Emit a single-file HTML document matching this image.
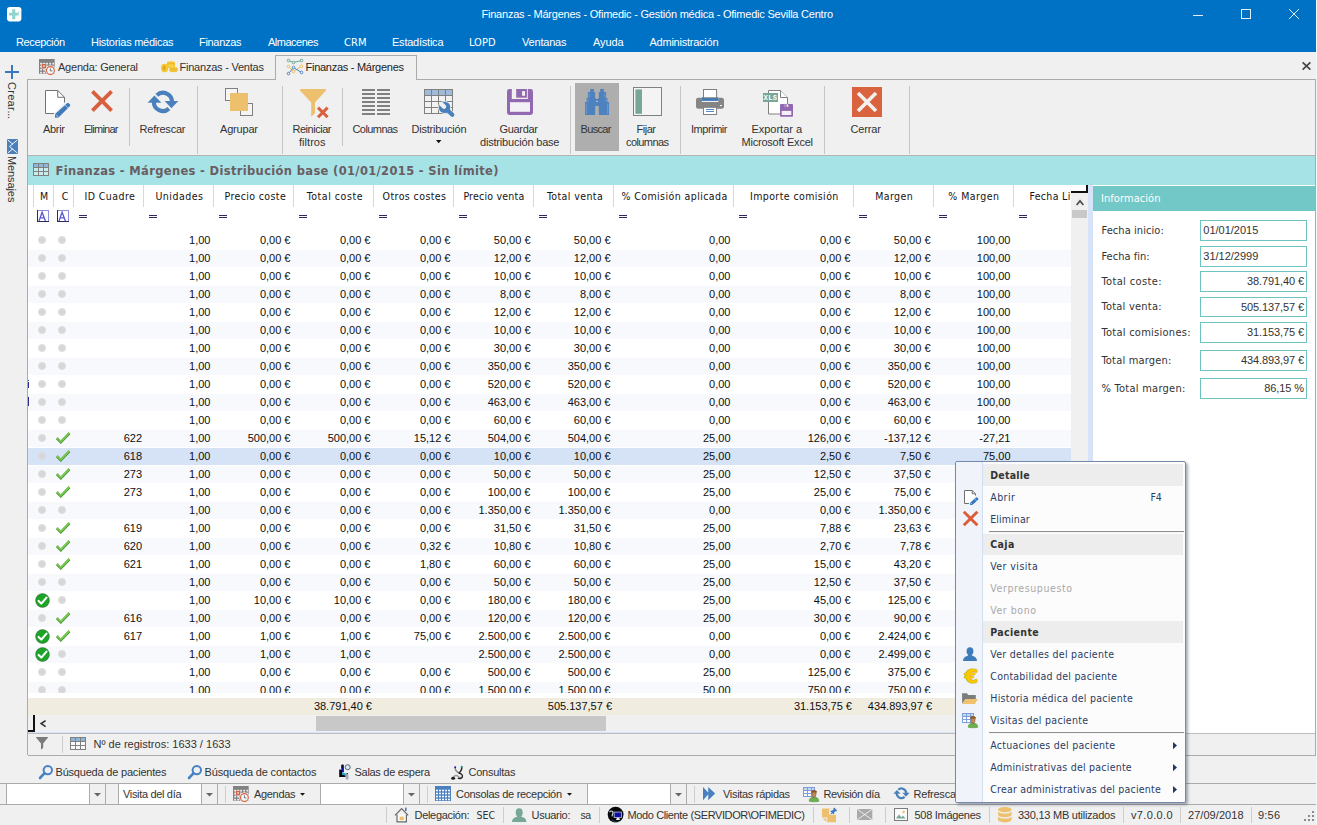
<!DOCTYPE html><html lang="es"><head><meta charset="utf-8"><title>Finanzas - Márgenes - Ofimedic</title><style>
*{box-sizing:border-box;margin:0;padding:0}
html,body{width:1317px;height:825px;overflow:hidden;background:#f0f0f0;font-family:"Liberation Sans",sans-serif;font-size:11px;color:#222}
.abs{position:absolute}
.t{position:absolute;white-space:nowrap;line-height:14px;font-size:11px}
#titlebar{position:absolute;left:0;top:0;width:1317px;height:52px;background:#0072c6}
#titlebar .t{color:#fff}
svg{position:absolute;overflow:visible}
.vsep{position:absolute;width:1px;background:#c8c8c8}
.hd{font-family:"DejaVu Sans Condensed","DejaVu Sans",sans-serif;font-size:11px}
.cell{position:absolute;white-space:nowrap;font-size:11px;line-height:16px;height:16px;text-align:right;color:#0e0e0e}
.row{position:absolute;left:33px;width:1038px;height:17px}
.row.alt{background:#f8f9fd}
.row.sel{background:#d6e3f6}

</style></head><body>
<div class="abs" style="left:0px;top:0px;width:1316px;height:52px;background:#0072c6"></div>
<div class="abs" style="left:1316px;top:0px;width:1px;height:825px;background:#f7f7f7"></div>
<svg style="left:6.8px;top:6.8px" width="15" height="15" viewBox="0 0 15 15"><rect x="0" y="0" width="14.400" height="14.400" rx="2.800" fill="#ffffff"/><path d="M5.200 2.200h3.100v3.600h3.300v2.800H8.300v3.600H5.200V8.600H2.100V5.800h3.100z" fill="#8dd4cd"/><rect x="11.300" y="4.400" width="0.900" height="1.600" fill="#8dd4cd"/></svg>
<div class="t" style="left:481.5px;top:7px;color:#ffffff;letter-spacing:-0.221px">Finanzas - Márgenes - Ofimedic - Gestión médica - Ofimedic Sevilla Centro</div>
<svg style="left:1193px;top:9px" width="110" height="12" viewBox="0 0 110 12"><path d="M0 6.5h10" stroke="#e6eef7" stroke-width="1" fill="none"/><rect x="48.5" y="0.5" width="9" height="9" stroke="#e6eef7" stroke-width="1" fill="none"/><path d="M96 0l10 10M106 0l-10 10" stroke="#e6eef7" stroke-width="1" fill="none"/></svg>
<div class="t" style="left:16px;top:35px;color:#ffffff;letter-spacing:-0.372px">Recepción</div>
<div class="t" style="left:91px;top:35px;color:#ffffff;letter-spacing:-0.269px">Historias médicas</div>
<div class="t" style="left:199px;top:35px;color:#ffffff;letter-spacing:-0.305px">Finanzas</div>
<div class="t" style="left:268px;top:35px;color:#ffffff;letter-spacing:-0.489px">Almacenes</div>
<div class="t" style="left:344px;top:36px;font-family:'DejaVu Sans Condensed', 'DejaVu Sans', sans-serif;color:#ffffff;letter-spacing:0.086px">CRM</div>
<div class="t" style="left:392px;top:35px;color:#ffffff;letter-spacing:-0.230px">Estadística</div>
<div class="t" style="left:469px;top:36px;font-family:'DejaVu Sans Condensed', 'DejaVu Sans', sans-serif;color:#ffffff;letter-spacing:0.001px">LOPD</div>
<div class="t" style="left:522px;top:35px;color:#ffffff;letter-spacing:-0.196px">Ventanas</div>
<div class="t" style="left:593px;top:35px;color:#ffffff;letter-spacing:-0.123px">Ayuda</div>
<div class="t" style="left:649.5px;top:35px;color:#ffffff;letter-spacing:-0.241px">Administración</div>
<svg style="left:5px;top:65px" width="14" height="14" viewBox="0 0 14 14"><path d="M7 0v14M0 7h14" stroke="#3a78bd" stroke-width="2" fill="none"/></svg>
<div class="t" style="left:18.5px;top:82px;transform-origin:0 0;transform:rotate(90deg);color:#333;letter-spacing:0.3px">Crear<span style="margin-left:-3.2px;letter-spacing:-0.3px"> ...</span></div>
<svg style="left:7px;top:139px" width="11" height="15" viewBox="0 0 11 15"><rect x="0" y="0" width="11" height="15" rx="1" fill="#4a80bc"/><path d="M9.900 1.400L2.500 7.500l7.400 6.100M1.200 1.400l4.500 3.700M1.200 13.600l4.500-3.700" stroke="#f6f8fb" stroke-width="1" fill="none" stroke-linecap="round"/></svg>
<div class="t" style="left:18.5px;top:155.500px;transform-origin:0 0;transform:rotate(90deg);color:#333;letter-spacing:-0.1px">Mensajes</div>
<div class="abs" style="left:27px;top:79px;width:249px;height:1px;background:#ababab"></div>
<div class="abs" style="left:416px;top:79px;width:900px;height:1px;background:#ababab"></div>
<div class="abs" style="left:27px;top:79px;width:1px;height:700px;background:#ababab"></div>
<div class="abs" style="left:1315px;top:79px;width:1px;height:700px;background:#ababab"></div>
<div class="abs" style="left:275px;top:55px;width:142px;height:1px;background:#ababab"></div>
<div class="abs" style="left:275px;top:55px;width:1px;height:25px;background:#ababab"></div>
<div class="abs" style="left:416px;top:55px;width:1px;height:25px;background:#ababab"></div>
<svg style="left:39px;top:59px" width="17" height="17" viewBox="0 0 17 17"><rect x="0" y="0" width="15.700" height="14.800" fill="#828282"/><rect x="1.2" y="3.8" width="1.700" height="1.700" fill="#f4f4f4"/><rect x="1.2" y="6.8" width="1.700" height="1.700" fill="#f4f4f4"/><rect x="1.2" y="9.8" width="1.700" height="1.700" fill="#f4f4f4"/><rect x="1.2" y="12.8" width="1.700" height="1.700" fill="#f4f4f4"/><rect x="4.25" y="3.8" width="1.700" height="1.700" fill="#f4f4f4"/><rect x="4.25" y="6.8" width="1.700" height="1.700" fill="#f4f4f4"/><rect x="4.25" y="9.8" width="1.700" height="1.700" fill="#f4f4f4"/><rect x="4.25" y="12.8" width="1.700" height="1.700" fill="#f4f4f4"/><rect x="7.3" y="3.8" width="1.700" height="1.700" fill="#f4f4f4"/><rect x="7.3" y="6.8" width="1.700" height="1.700" fill="#f4f4f4"/><rect x="7.3" y="9.8" width="1.700" height="1.700" fill="#f4f4f4"/><rect x="7.3" y="12.8" width="1.700" height="1.700" fill="#f4f4f4"/><rect x="10.35" y="3.8" width="1.700" height="1.700" fill="#f4f4f4"/><rect x="10.35" y="6.8" width="1.700" height="1.700" fill="#f4f4f4"/><rect x="10.35" y="9.8" width="1.700" height="1.700" fill="#f4f4f4"/><rect x="10.35" y="12.8" width="1.700" height="1.700" fill="#f4f4f4"/><rect x="13.4" y="3.8" width="1.700" height="1.700" fill="#f4f4f4"/><rect x="13.4" y="6.8" width="1.700" height="1.700" fill="#f4f4f4"/><rect x="13.4" y="9.8" width="1.700" height="1.700" fill="#f4f4f4"/><rect x="13.4" y="12.8" width="1.700" height="1.700" fill="#f4f4f4"/><rect x="2.500" y="4.600" width="5" height="4.800" fill="#f0f0f0"/><rect x="3.600" y="5.600" width="2.900" height="2.700" fill="#eef6f8" stroke="#d9603f" stroke-width="1.300"/><circle cx="11.400" cy="11.500" r="5.200" fill="#f0f0f0"/><circle cx="11.400" cy="11.500" r="3.900" fill="#f2f8f9" stroke="#d9603f" stroke-width="1.100"/><path d="M11.400 9.300v2.600h2" stroke="#666" stroke-width="0.900" fill="none"/></svg>
<div class="t" style="left:58px;top:60px;color:#333;letter-spacing:-0.227px">Agenda: General</div>
<svg style="left:161px;top:61px" width="17" height="12" viewBox="0 0 17 12"><ellipse cx="10" cy="1.8" rx="4" ry="1.8" fill="#f7ce3e"/><rect x="6" y="1.8" width="8" height="5" fill="#eeb92c"/><ellipse cx="10" cy="4.6" rx="4" ry="1.6" fill="#f7ce3e"/><ellipse cx="12.5" cy="7.4" rx="4" ry="1.7" fill="#f7ce3e"/><rect x="8.5" y="7.4" width="8" height="2.4" fill="#e8b028"/><ellipse cx="12.5" cy="9.6" rx="4" ry="1.7" fill="#f2c233"/><ellipse cx="3.6" cy="7" rx="3.6" ry="4.2" fill="#f5c92f"/><ellipse cx="3.2" cy="7" rx="1.6" ry="2.4" fill="#e3a81f"/></svg>
<div class="t" style="left:179.5px;top:60px;color:#333;letter-spacing:-0.222px">Finanzas - Ventas</div>
<svg style="left:287px;top:59px" width="17" height="17" viewBox="0 0 17 17"><path d="M1.500 1.500l5 2 8-2" stroke="#5fa48a" stroke-width="0.900" fill="none"/><path d="M1.500 7.400l5 5.100 8-5.200" stroke="#efbb5e" stroke-width="1" fill="none"/><path d="M1.500 14.600l5-6.100 8 5" stroke="#4a80bf" stroke-width="1" fill="none"/><g fill="#f0f0f0" stroke-width="0.900"><circle cx="1.500" cy="1.500" r="1.300" stroke="#5fa48a"/><circle cx="6.500" cy="3.500" r="1.300" stroke="#5fa48a"/><circle cx="14.500" cy="1.500" r="1.300" stroke="#5fa48a"/><circle cx="1.500" cy="7.400" r="1.300" stroke="#efbb5e"/><circle cx="14.500" cy="7.300" r="1.300" stroke="#efbb5e"/><circle cx="6.500" cy="12.500" r="1.300" stroke="#efbb5e"/><circle cx="1.500" cy="14.600" r="1.300" stroke="#4a80bf"/><circle cx="6.500" cy="8.500" r="1.300" stroke="#4a80bf"/><circle cx="14.500" cy="13.500" r="1.300" stroke="#4a80bf"/></g></svg>
<div class="t" style="left:305.5px;top:60px;color:#222;letter-spacing:-0.268px">Finanzas - Márgenes</div>
<svg style="left:1302px;top:62px" width="9" height="8" viewBox="0 0 9 8"><path d="M0.6 0.4l7.8 7.2M8.4 0.4l-7.8 7.2" stroke="#444" stroke-width="1.7" fill="none"/></svg>
<div class="abs" style="left:129px;top:88px;width:1px;height:58px;background:#c6c6c6"></div>
<div class="abs" style="left:342px;top:88px;width:1px;height:58px;background:#c6c6c6"></div>
<div class="abs" style="left:197px;top:86px;width:1px;height:68px;background:#c6c6c6"></div>
<div class="abs" style="left:282px;top:86px;width:1px;height:68px;background:#c6c6c6"></div>
<div class="abs" style="left:570px;top:86px;width:1px;height:68px;background:#c6c6c6"></div>
<div class="abs" style="left:680px;top:86px;width:1px;height:68px;background:#c6c6c6"></div>
<div class="abs" style="left:824px;top:86px;width:1px;height:68px;background:#c6c6c6"></div>
<div class="abs" style="left:909px;top:86px;width:1px;height:68px;background:#c6c6c6"></div>
<div class="abs" style="left:28px;top:155px;width:1287px;height:1px;background:#b4b4b4"></div>
<div class="abs" style="left:575px;top:83px;width:44px;height:68px;background:#aeaeae"></div>
<svg style="left:45px;top:90px" width="26" height="29" viewBox="0 0 26 29"><path d="M0.5 0.5H12.7L19.5 7.3V23.5H0.5z" fill="#fff"/><path d="M9 23.5H0.500V0.500H12.700L19.500 7.300V12.800" fill="none" stroke="#737373"/><path d="M12.700 0.500V7.300H19.500" fill="none" stroke="#737373"/><path d="M20.6 11.600l6 6-12 12.400-6.400 0.400 0.200-6.200z" fill="#f0f0f0"/><path d="M22.300 13.100a1 1 0 0 1 1.200 0l1.500 1.500a1 1 0 0 1 0 1.300L13.600 27.500 10 27.800 10.100 24.100z" fill="#3f7abb"/><path d="M20.300 15.200l2.700 2.700M10.900 24.600l2.400 2.400" stroke="#e8eef7" stroke-width="0.7" fill="none"/></svg>
<div class="t" style="left:43px;top:122px;color:#333;letter-spacing:-0.306px">Abrir</div>
<svg style="left:91px;top:90px" width="22" height="22" viewBox="0 0 22 22"><path d="M1.4 1.4l19.2 19.2M20.6 1.4L1.4 20.6" stroke="#d9603f" stroke-width="3.8" fill="none"/></svg>
<div class="t" style="left:84px;top:122px;color:#333;letter-spacing:-0.747px">Eliminar</div>
<svg style="left:147px;top:90px" width="32" height="24" viewBox="0 0 32 24"><g fill="none" stroke="#4a80bc" stroke-width="4.1"><path d="M9.84 5.17A9.05 9.05 0 0 1 24.95 12.2"/><path d="M21.96 18.63A9.05 9.05 0 0 1 6.85 11.6"/></g><path d="M17.65 11h13.75l-7 7.2z" fill="#4a80bc"/><path d="M0.6 12.8h13.8l-7-7.2z" fill="#4a80bc"/></svg>
<div class="t" style="left:139.5px;top:122px;color:#333;letter-spacing:-0.210px">Refrescar</div>
<svg style="left:225px;top:88px" width="30" height="29" viewBox="0 0 30 29"><rect x="0.5" y="0.5" width="12" height="12" fill="#f5f5f5" stroke="#808080"/><rect x="15.5" y="15.5" width="12" height="12" fill="#f5f5f5" stroke="#808080"/><rect x="5" y="5" width="18" height="18" fill="#edc06e"/></svg>
<div class="t" style="left:220px;top:122px;color:#333;letter-spacing:-0.189px">Agrupar</div>
<svg style="left:300px;top:89px" width="30" height="30" viewBox="0 0 30 30"><path d="M0 0h26v1.5L15 13.5v10.8l-3.8 3.4V13.5L0 1.5z" fill="#edc06e"/><path d="M18 18.600l9.600 9.600M27.600 18.600l-9.600 9.600" stroke="#d9603f" stroke-width="3" fill="none"/></svg>
<div class="t" style="left:292.5px;top:122px;color:#333;letter-spacing:-0.474px">Reiniciar</div>
<div class="t" style="left:299px;top:135px;color:#333;letter-spacing:0.037px">filtros</div>
<svg style="left:362px;top:89px" width="28" height="26" viewBox="0 0 28 26"><rect x="0" y="0" width="13" height="2" fill="#808080"/><rect x="15" y="0" width="13" height="2" fill="#808080"/><rect x="0" y="4" width="13" height="2" fill="#808080"/><rect x="15" y="4" width="13" height="2" fill="#808080"/><rect x="0" y="8" width="13" height="2" fill="#808080"/><rect x="15" y="8" width="13" height="2" fill="#808080"/><rect x="0" y="12" width="13" height="2" fill="#808080"/><rect x="15" y="12" width="13" height="2" fill="#808080"/><rect x="0" y="16" width="13" height="2" fill="#808080"/><rect x="15" y="16" width="13" height="2" fill="#808080"/><rect x="0" y="20" width="13" height="2" fill="#808080"/><rect x="15" y="20" width="13" height="2" fill="#808080"/><rect x="0" y="24" width="13" height="2" fill="#808080"/><rect x="15" y="24" width="13" height="2" fill="#808080"/></svg>
<div class="t" style="left:352.5px;top:122px;color:#333;letter-spacing:-0.574px">Columnas</div>
<svg style="left:424px;top:89px" width="32" height="30" viewBox="0 0 32 30"><rect x="0.5" y="0.5" width="28" height="24" fill="#f2f2f2" stroke="#808080"/><rect x="1" y="1" width="27" height="5" fill="#9fbada"/><path d="M0.5 6.500h28M0.500 12.500h28M0.500 18.500h28M7.500 0.500v24M14.500 0.500v24M21.500 0.500v24" stroke="#808080" stroke-width="1" fill="none"/><g stroke="#f0f0f0" fill="#f0f0f0" stroke-width="1.6"><circle cx="20.600" cy="18.400" r="5.700"/><path d="M21.500 19.300L28.300 25.700" stroke-width="5.600" stroke-linecap="round"/></g><circle cx="20.600" cy="18.400" r="5.700" fill="#4a80bc"/><path d="M21.500 19.300L28.300 25.700" stroke="#4a80bc" stroke-width="4.200" stroke-linecap="round" fill="none"/><path d="M20 17.600L17.300 15" stroke="#f0f0f0" stroke-width="4.400" stroke-linecap="round" fill="none"/></svg>
<div class="t" style="left:411.5px;top:122px;color:#333;letter-spacing:-0.224px">Distribución</div>
<svg style="left:436px;top:140px" width="6" height="4" viewBox="0 0 6 4"><path d="M0 0h5.4l-2.7 3.2z" fill="#111"/></svg>
<svg style="left:507px;top:89px" width="26" height="26" viewBox="0 0 26 26"><rect x="0" y="0" width="26" height="26" rx="2.400" fill="#9268b0"/><rect x="3" y="13.200" width="20" height="9.600" fill="#f3f1f6"/><rect x="4.800" y="0" width="16" height="10" fill="#f0f0f0"/><rect x="9.200" y="0" width="10.700" height="8.700" fill="#9268b0"/><rect x="15.100" y="2.100" width="2.900" height="4.700" fill="#f3f1f6"/></svg>
<div class="t" style="left:499.5px;top:122px;color:#333;letter-spacing:-0.309px">Guardar</div>
<div class="t" style="left:480px;top:135px;color:#333;letter-spacing:-0.191px">distribución base</div>
<svg style="left:585px;top:89px" width="24" height="26" viewBox="0 0 24 26"><g fill="#4d82be"><rect x="5.200" y="0" width="3.600" height="4"/><rect x="2.900" y="3" width="7.300" height="7"/><rect x="1.600" y="9" width="9.100" height="5"/><rect x="0" y="13" width="10.200" height="13"/><rect x="15.200" y="0" width="3.600" height="4"/><rect x="13.800" y="3" width="7.300" height="7"/><rect x="13.300" y="9" width="9.100" height="5"/><rect x="13.800" y="13" width="10.200" height="13"/><rect x="10" y="10" width="4" height="7"/></g><path d="M1.300 14.500v10.500M22.700 14.500v10.500M4.200 4.500v4M19.800 4.500v4M2.900 10v3M21.100 10v3" stroke="#86abd6" stroke-width="0.600" fill="none"/><rect x="11.200" y="11.800" width="1.600" height="1.200" fill="#b9cfe8"/></svg>
<div class="t" style="left:580.5px;top:122px;color:#333;letter-spacing:-0.647px">Buscar</div>
<svg style="left:633px;top:87px" width="30" height="30" viewBox="0 0 30 30"><rect x="0.5" y="0.5" width="28" height="28" fill="#f4f4f4" stroke="#808080"/><rect x="2.4" y="2.4" width="6.6" height="24.4" fill="#76a797"/></svg>
<div class="t" style="left:636.5px;top:122px;color:#333;letter-spacing:-0.472px">Fijar</div>
<div class="t" style="left:626px;top:135px;color:#333;letter-spacing:-0.583px">columnas</div>
<svg style="left:696px;top:89px" width="28" height="27" viewBox="0 0 28 27"><rect x="0" y="8.700" width="28" height="11.100" rx="2.200" fill="#858585"/><rect x="5.900" y="8" width="16.400" height="5" fill="#f0f0f0"/><rect x="5.900" y="8.200" width="16.400" height="3.700" fill="#3f79bb"/><rect x="7.500" y="0.500" width="13.100" height="8.300" fill="#fff" stroke="#7f7f7f"/><rect x="7.500" y="18.300" width="13.100" height="7.200" fill="#fff" stroke="#7f7f7f"/><path d="M10.100 20.500h7.900M10.100 22.500h7.900" stroke="#3f79bb" stroke-width="0.900" fill="none"/><rect x="24" y="16" width="1.900" height="1.100" fill="#fff"/></svg>
<div class="t" style="left:691px;top:122px;color:#333;letter-spacing:-0.459px">Imprimir</div>
<svg style="left:763px;top:90px" width="31" height="28" viewBox="0 0 31 28"><path d="M5.5 0.5h12l7 7v16.5h-19z" fill="#fff" stroke="#808080"/><path d="M17.5 0.5v7h7" fill="#fff" stroke="#808080"/><rect x="0" y="3" width="15" height="9" fill="#76a797"/><text x="7.5" y="10.3" font-family="Liberation Mono, monospace" font-weight="bold" font-size="7.2" fill="#fff" text-anchor="middle" letter-spacing="0.3">XLS</text><rect x="17" y="13.900" width="13" height="12.900" rx="1" fill="#9268b0"/><rect x="18.700" y="20.900" width="9.600" height="4.100" fill="#f3f1f6"/><rect x="20.900" y="13.900" width="5" height="3.300" fill="#a988c4"/><rect x="23.800" y="14.500" width="1.300" height="2.100" fill="#f3f1f6"/></svg>
<div class="t" style="left:751.5px;top:122px;color:#333;letter-spacing:-0.027px">Exportar a</div>
<div class="t" style="left:741.5px;top:135px;color:#333;letter-spacing:-0.219px">Microsoft Excel</div>
<svg style="left:852px;top:87px" width="30" height="30" viewBox="0 0 30 30"><rect x="0" y="0" width="30" height="30" fill="#d9623f"/><path d="M6 6l18 18M24 6L6 24" stroke="#f4f0ee" stroke-width="3.6" fill="none"/></svg>
<div class="t" style="left:850.5px;top:122px;color:#333;letter-spacing:-0.134px">Cerrar</div>
<div class="abs" style="left:28px;top:156px;width:1287px;height:29px;background:#a5e3e6"></div>
<svg style="left:33px;top:163px" width="17" height="13" viewBox="0 0 17 13"><rect x="0.5" y="0.5" width="15" height="12" fill="#c9ecee" stroke="#808080"/><rect x="1" y="1" width="14" height="3" fill="#8fb6d6"/><path d="M0.5 4.5h15M0.5 8.5h15M5.5 0.5v12M10.5 0.5v12" stroke="#808080" stroke-width="1" fill="none"/></svg>
<div class="t" style="left:55.5px;top:164px;font-size:11.5px;font-family:'DejaVu Sans', sans-serif;font-weight:bold;color:#6a5d62;letter-spacing:0.342px">Finanzas - Márgenes - Distribución base (01/01/2015 - Sin límite)</div>
<div class="abs" style="left:28px;top:185px;width:1060px;height:548px;background:#ffffff"></div>
<div class="abs" style="left:28px;top:185px;width:1043px;height:508px;overflow:hidden">
<div class="abs" style="left:5px;top:0px;width:1px;height:22px;background:#d9d9d9"></div>
<div class="t" style="left:12px;top:4px;font-size:10.5px;font-family:'DejaVu Sans Condensed', 'DejaVu Sans', sans-serif;color:#141414;letter-spacing:-0.152px">M</div>
<div class="abs" style="left:25px;top:0px;width:1px;height:22px;background:#d9d9d9"></div>
<div class="t" style="left:33.8px;top:4px;font-size:10.5px;font-family:'DejaVu Sans Condensed', 'DejaVu Sans', sans-serif;color:#141414;letter-spacing:-0.598px">C</div>
<div class="abs" style="left:45px;top:0px;width:1px;height:22px;background:#d9d9d9"></div>
<div class="t" style="left:56.5px;top:4px;font-size:10.5px;font-family:'DejaVu Sans Condensed', 'DejaVu Sans', sans-serif;color:#141414;letter-spacing:0.425px">ID Cuadre</div>
<div class="abs" style="left:115px;top:0px;width:1px;height:22px;background:#d9d9d9"></div>
<div class="t" style="left:127.4px;top:4px;font-size:10.5px;font-family:'DejaVu Sans Condensed', 'DejaVu Sans', sans-serif;color:#141414;letter-spacing:0.507px">Unidades</div>
<div class="abs" style="left:185px;top:0px;width:1px;height:22px;background:#d9d9d9"></div>
<div class="t" style="left:196.5px;top:4px;font-size:10.5px;font-family:'DejaVu Sans Condensed', 'DejaVu Sans', sans-serif;color:#141414;letter-spacing:0.384px">Precio coste</div>
<div class="abs" style="left:265px;top:0px;width:1px;height:22px;background:#d9d9d9"></div>
<div class="t" style="left:278.7px;top:4px;font-size:10.5px;font-family:'DejaVu Sans Condensed', 'DejaVu Sans', sans-serif;color:#141414;letter-spacing:0.551px">Total coste</div>
<div class="abs" style="left:345px;top:0px;width:1px;height:22px;background:#d9d9d9"></div>
<div class="t" style="left:354.6px;top:4px;font-size:10.5px;font-family:'DejaVu Sans Condensed', 'DejaVu Sans', sans-serif;color:#141414;letter-spacing:0.417px">Otros costes</div>
<div class="abs" style="left:425px;top:0px;width:1px;height:22px;background:#d9d9d9"></div>
<div class="t" style="left:435.4px;top:4px;font-size:10.5px;font-family:'DejaVu Sans Condensed', 'DejaVu Sans', sans-serif;color:#141414;letter-spacing:0.213px">Precio venta</div>
<div class="abs" style="left:505px;top:0px;width:1px;height:22px;background:#d9d9d9"></div>
<div class="t" style="left:518.9px;top:4px;font-size:10.5px;font-family:'DejaVu Sans Condensed', 'DejaVu Sans', sans-serif;color:#141414;letter-spacing:0.404px">Total venta</div>
<div class="abs" style="left:585px;top:0px;width:1px;height:22px;background:#d9d9d9"></div>
<div class="t" style="left:593.4px;top:4px;font-size:10.5px;font-family:'DejaVu Sans Condensed', 'DejaVu Sans', sans-serif;color:#141414;letter-spacing:0.422px">% Comisión aplicada</div>
<div class="abs" style="left:705px;top:0px;width:1px;height:22px;background:#d9d9d9"></div>
<div class="t" style="left:722px;top:4px;font-size:10.5px;font-family:'DejaVu Sans Condensed', 'DejaVu Sans', sans-serif;color:#141414;letter-spacing:0.402px">Importe comisión</div>
<div class="abs" style="left:825px;top:0px;width:1px;height:22px;background:#d9d9d9"></div>
<div class="t" style="left:847.2px;top:4px;font-size:10.5px;font-family:'DejaVu Sans Condensed', 'DejaVu Sans', sans-serif;color:#141414;letter-spacing:0.432px">Margen</div>
<div class="abs" style="left:905px;top:0px;width:1px;height:22px;background:#d9d9d9"></div>
<div class="t" style="left:920.2px;top:4px;font-size:10.5px;font-family:'DejaVu Sans Condensed', 'DejaVu Sans', sans-serif;color:#141414;letter-spacing:0.484px">% Margen</div>
<div class="abs" style="left:985px;top:0px;width:1px;height:22px;background:#d9d9d9"></div>
<div class="t" style="left:1001.5px;top:4px;font-size:10.5px;font-family:'DejaVu Sans Condensed', 'DejaVu Sans', sans-serif;color:#141414;letter-spacing:0.324px">Fecha Li</div>
<svg style="left:9px;top:25px" width="12" height="12" viewBox="0 0 12 12"><rect x="0" y="0" width="12" height="12" fill="#fff"/><path d="M0 0.500h12M11.500 0v12" stroke="#8e8edc" stroke-width="1" fill="none"/><path d="M0.500 0v12M0 11.500h12" stroke="#2a2a62" stroke-width="1" fill="none"/><path d="M2 11L5.100 2.200 8.400 11M3.200 7.800h3.900" stroke="#5a5ad2" stroke-width="1.300" fill="none"/></svg>
<svg style="left:29px;top:25px" width="12" height="12" viewBox="0 0 12 12"><rect x="0" y="0" width="12" height="12" fill="#fff"/><path d="M0 0.500h12M11.500 0v12" stroke="#8e8edc" stroke-width="1" fill="none"/><path d="M0.500 0v12M0 11.500h12" stroke="#2a2a62" stroke-width="1" fill="none"/><path d="M2 11L5.100 2.200 8.400 11M3.200 7.800h3.900" stroke="#5a5ad2" stroke-width="1.300" fill="none"/></svg>
<div class="abs" style="left:51px;top:30px;width:8px;height:1px;background:#2c2c60"></div>
<div class="abs" style="left:51px;top:32px;width:8px;height:1px;background:#2c2c60"></div>
<div class="abs" style="left:121px;top:30px;width:8px;height:1px;background:#2c2c60"></div>
<div class="abs" style="left:121px;top:32px;width:8px;height:1px;background:#2c2c60"></div>
<div class="abs" style="left:191px;top:30px;width:8px;height:1px;background:#2c2c60"></div>
<div class="abs" style="left:191px;top:32px;width:8px;height:1px;background:#2c2c60"></div>
<div class="abs" style="left:271px;top:30px;width:8px;height:1px;background:#2c2c60"></div>
<div class="abs" style="left:271px;top:32px;width:8px;height:1px;background:#2c2c60"></div>
<div class="abs" style="left:351px;top:30px;width:8px;height:1px;background:#2c2c60"></div>
<div class="abs" style="left:351px;top:32px;width:8px;height:1px;background:#2c2c60"></div>
<div class="abs" style="left:431px;top:30px;width:8px;height:1px;background:#2c2c60"></div>
<div class="abs" style="left:431px;top:32px;width:8px;height:1px;background:#2c2c60"></div>
<div class="abs" style="left:511px;top:30px;width:8px;height:1px;background:#2c2c60"></div>
<div class="abs" style="left:511px;top:32px;width:8px;height:1px;background:#2c2c60"></div>
<div class="abs" style="left:591px;top:30px;width:8px;height:1px;background:#2c2c60"></div>
<div class="abs" style="left:591px;top:32px;width:8px;height:1px;background:#2c2c60"></div>
<div class="abs" style="left:711px;top:30px;width:8px;height:1px;background:#2c2c60"></div>
<div class="abs" style="left:711px;top:32px;width:8px;height:1px;background:#2c2c60"></div>
<div class="abs" style="left:831px;top:30px;width:8px;height:1px;background:#2c2c60"></div>
<div class="abs" style="left:831px;top:32px;width:8px;height:1px;background:#2c2c60"></div>
<div class="abs" style="left:911px;top:30px;width:8px;height:1px;background:#2c2c60"></div>
<div class="abs" style="left:911px;top:32px;width:8px;height:1px;background:#2c2c60"></div>
<div class="abs" style="left:991px;top:30px;width:8px;height:1px;background:#2c2c60"></div>
<div class="abs" style="left:991px;top:32px;width:8px;height:1px;background:#2c2c60"></div>
<div class="row" style="left:0;top:47px;width:1043px">
<div class="abs" style="left:9.7px;top:3.5px;width:8.6px;height:8.6px;border-radius:50%;background:radial-gradient(circle at 50% 50%,#d6d6d6 0,#d9d9d9 55%,rgba(222,222,222,0.55) 80%,rgba(225,225,225,0) 100%)"></div>
<div class="abs" style="left:29.8px;top:3.5px;width:8.6px;height:8.6px;border-radius:50%;background:radial-gradient(circle at 50% 50%,#d6d6d6 0,#d9d9d9 55%,rgba(222,222,222,0.55) 80%,rgba(225,225,225,0) 100%)"></div>
<div class="cell" style="right:860.5px">1,00</div>
<div class="cell" style="right:780.5px">0,00 €</div>
<div class="cell" style="right:700.5px">0,00 €</div>
<div class="cell" style="right:620.5px">0,00 €</div>
<div class="cell" style="right:540.5px">50,00 €</div>
<div class="cell" style="right:460.5px">50,00 €</div>
<div class="cell" style="right:340.5px">0,00</div>
<div class="cell" style="right:220.5px">0,00 €</div>
<div class="cell" style="right:140.5px">50,00 €</div>
<div class="cell" style="right:60.5px">100,00</div>
</div>
<div class="row alt" style="left:0;top:65px;width:1043px">
<div class="abs" style="left:9.7px;top:3.5px;width:8.6px;height:8.6px;border-radius:50%;background:radial-gradient(circle at 50% 50%,#d6d6d6 0,#d9d9d9 55%,rgba(222,222,222,0.55) 80%,rgba(225,225,225,0) 100%)"></div>
<div class="abs" style="left:29.8px;top:3.5px;width:8.6px;height:8.6px;border-radius:50%;background:radial-gradient(circle at 50% 50%,#d6d6d6 0,#d9d9d9 55%,rgba(222,222,222,0.55) 80%,rgba(225,225,225,0) 100%)"></div>
<div class="cell" style="right:860.5px">1,00</div>
<div class="cell" style="right:780.5px">0,00 €</div>
<div class="cell" style="right:700.5px">0,00 €</div>
<div class="cell" style="right:620.5px">0,00 €</div>
<div class="cell" style="right:540.5px">12,00 €</div>
<div class="cell" style="right:460.5px">12,00 €</div>
<div class="cell" style="right:340.5px">0,00</div>
<div class="cell" style="right:220.5px">0,00 €</div>
<div class="cell" style="right:140.5px">12,00 €</div>
<div class="cell" style="right:60.5px">100,00</div>
</div>
<div class="row" style="left:0;top:83px;width:1043px">
<div class="abs" style="left:9.7px;top:3.5px;width:8.6px;height:8.6px;border-radius:50%;background:radial-gradient(circle at 50% 50%,#d6d6d6 0,#d9d9d9 55%,rgba(222,222,222,0.55) 80%,rgba(225,225,225,0) 100%)"></div>
<div class="abs" style="left:29.8px;top:3.5px;width:8.6px;height:8.6px;border-radius:50%;background:radial-gradient(circle at 50% 50%,#d6d6d6 0,#d9d9d9 55%,rgba(222,222,222,0.55) 80%,rgba(225,225,225,0) 100%)"></div>
<div class="cell" style="right:860.5px">1,00</div>
<div class="cell" style="right:780.5px">0,00 €</div>
<div class="cell" style="right:700.5px">0,00 €</div>
<div class="cell" style="right:620.5px">0,00 €</div>
<div class="cell" style="right:540.5px">10,00 €</div>
<div class="cell" style="right:460.5px">10,00 €</div>
<div class="cell" style="right:340.5px">0,00</div>
<div class="cell" style="right:220.5px">0,00 €</div>
<div class="cell" style="right:140.5px">10,00 €</div>
<div class="cell" style="right:60.5px">100,00</div>
</div>
<div class="row alt" style="left:0;top:101px;width:1043px">
<div class="abs" style="left:9.7px;top:3.5px;width:8.6px;height:8.6px;border-radius:50%;background:radial-gradient(circle at 50% 50%,#d6d6d6 0,#d9d9d9 55%,rgba(222,222,222,0.55) 80%,rgba(225,225,225,0) 100%)"></div>
<div class="abs" style="left:29.8px;top:3.5px;width:8.6px;height:8.6px;border-radius:50%;background:radial-gradient(circle at 50% 50%,#d6d6d6 0,#d9d9d9 55%,rgba(222,222,222,0.55) 80%,rgba(225,225,225,0) 100%)"></div>
<div class="cell" style="right:860.5px">1,00</div>
<div class="cell" style="right:780.5px">0,00 €</div>
<div class="cell" style="right:700.5px">0,00 €</div>
<div class="cell" style="right:620.5px">0,00 €</div>
<div class="cell" style="right:540.5px">8,00 €</div>
<div class="cell" style="right:460.5px">8,00 €</div>
<div class="cell" style="right:340.5px">0,00</div>
<div class="cell" style="right:220.5px">0,00 €</div>
<div class="cell" style="right:140.5px">8,00 €</div>
<div class="cell" style="right:60.5px">100,00</div>
</div>
<div class="row" style="left:0;top:119px;width:1043px">
<div class="abs" style="left:9.7px;top:3.5px;width:8.6px;height:8.6px;border-radius:50%;background:radial-gradient(circle at 50% 50%,#d6d6d6 0,#d9d9d9 55%,rgba(222,222,222,0.55) 80%,rgba(225,225,225,0) 100%)"></div>
<div class="abs" style="left:29.8px;top:3.5px;width:8.6px;height:8.6px;border-radius:50%;background:radial-gradient(circle at 50% 50%,#d6d6d6 0,#d9d9d9 55%,rgba(222,222,222,0.55) 80%,rgba(225,225,225,0) 100%)"></div>
<div class="cell" style="right:860.5px">1,00</div>
<div class="cell" style="right:780.5px">0,00 €</div>
<div class="cell" style="right:700.5px">0,00 €</div>
<div class="cell" style="right:620.5px">0,00 €</div>
<div class="cell" style="right:540.5px">12,00 €</div>
<div class="cell" style="right:460.5px">12,00 €</div>
<div class="cell" style="right:340.5px">0,00</div>
<div class="cell" style="right:220.5px">0,00 €</div>
<div class="cell" style="right:140.5px">12,00 €</div>
<div class="cell" style="right:60.5px">100,00</div>
</div>
<div class="row alt" style="left:0;top:137px;width:1043px">
<div class="abs" style="left:9.7px;top:3.5px;width:8.6px;height:8.6px;border-radius:50%;background:radial-gradient(circle at 50% 50%,#d6d6d6 0,#d9d9d9 55%,rgba(222,222,222,0.55) 80%,rgba(225,225,225,0) 100%)"></div>
<div class="abs" style="left:29.8px;top:3.5px;width:8.6px;height:8.6px;border-radius:50%;background:radial-gradient(circle at 50% 50%,#d6d6d6 0,#d9d9d9 55%,rgba(222,222,222,0.55) 80%,rgba(225,225,225,0) 100%)"></div>
<div class="cell" style="right:860.5px">1,00</div>
<div class="cell" style="right:780.5px">0,00 €</div>
<div class="cell" style="right:700.5px">0,00 €</div>
<div class="cell" style="right:620.5px">0,00 €</div>
<div class="cell" style="right:540.5px">10,00 €</div>
<div class="cell" style="right:460.5px">10,00 €</div>
<div class="cell" style="right:340.5px">0,00</div>
<div class="cell" style="right:220.5px">0,00 €</div>
<div class="cell" style="right:140.5px">10,00 €</div>
<div class="cell" style="right:60.5px">100,00</div>
</div>
<div class="row" style="left:0;top:155px;width:1043px">
<div class="abs" style="left:9.7px;top:3.5px;width:8.6px;height:8.6px;border-radius:50%;background:radial-gradient(circle at 50% 50%,#d6d6d6 0,#d9d9d9 55%,rgba(222,222,222,0.55) 80%,rgba(225,225,225,0) 100%)"></div>
<div class="abs" style="left:29.8px;top:3.5px;width:8.6px;height:8.6px;border-radius:50%;background:radial-gradient(circle at 50% 50%,#d6d6d6 0,#d9d9d9 55%,rgba(222,222,222,0.55) 80%,rgba(225,225,225,0) 100%)"></div>
<div class="cell" style="right:860.5px">1,00</div>
<div class="cell" style="right:780.5px">0,00 €</div>
<div class="cell" style="right:700.5px">0,00 €</div>
<div class="cell" style="right:620.5px">0,00 €</div>
<div class="cell" style="right:540.5px">30,00 €</div>
<div class="cell" style="right:460.5px">30,00 €</div>
<div class="cell" style="right:340.5px">0,00</div>
<div class="cell" style="right:220.5px">0,00 €</div>
<div class="cell" style="right:140.5px">30,00 €</div>
<div class="cell" style="right:60.5px">100,00</div>
</div>
<div class="row alt" style="left:0;top:173px;width:1043px">
<div class="abs" style="left:9.7px;top:3.5px;width:8.6px;height:8.6px;border-radius:50%;background:radial-gradient(circle at 50% 50%,#d6d6d6 0,#d9d9d9 55%,rgba(222,222,222,0.55) 80%,rgba(225,225,225,0) 100%)"></div>
<div class="abs" style="left:29.8px;top:3.5px;width:8.6px;height:8.6px;border-radius:50%;background:radial-gradient(circle at 50% 50%,#d6d6d6 0,#d9d9d9 55%,rgba(222,222,222,0.55) 80%,rgba(225,225,225,0) 100%)"></div>
<div class="cell" style="right:860.5px">1,00</div>
<div class="cell" style="right:780.5px">0,00 €</div>
<div class="cell" style="right:700.5px">0,00 €</div>
<div class="cell" style="right:620.5px">0,00 €</div>
<div class="cell" style="right:540.5px">350,00 €</div>
<div class="cell" style="right:460.5px">350,00 €</div>
<div class="cell" style="right:340.5px">0,00</div>
<div class="cell" style="right:220.5px">0,00 €</div>
<div class="cell" style="right:140.5px">350,00 €</div>
<div class="cell" style="right:60.5px">100,00</div>
</div>
<div class="row" style="left:0;top:191px;width:1043px">
<div class="abs" style="left:9.7px;top:3.5px;width:8.6px;height:8.6px;border-radius:50%;background:radial-gradient(circle at 50% 50%,#d6d6d6 0,#d9d9d9 55%,rgba(222,222,222,0.55) 80%,rgba(225,225,225,0) 100%)"></div>
<div class="abs" style="left:29.8px;top:3.5px;width:8.6px;height:8.6px;border-radius:50%;background:radial-gradient(circle at 50% 50%,#d6d6d6 0,#d9d9d9 55%,rgba(222,222,222,0.55) 80%,rgba(225,225,225,0) 100%)"></div>
<div class="cell" style="right:860.5px">1,00</div>
<div class="cell" style="right:780.5px">0,00 €</div>
<div class="cell" style="right:700.5px">0,00 €</div>
<div class="cell" style="right:620.5px">0,00 €</div>
<div class="cell" style="right:540.5px">520,00 €</div>
<div class="cell" style="right:460.5px">520,00 €</div>
<div class="cell" style="right:340.5px">0,00</div>
<div class="cell" style="right:220.5px">0,00 €</div>
<div class="cell" style="right:140.5px">520,00 €</div>
<div class="cell" style="right:60.5px">100,00</div>
</div>
<div class="row alt" style="left:0;top:209px;width:1043px">
<div class="abs" style="left:9.7px;top:3.5px;width:8.6px;height:8.6px;border-radius:50%;background:radial-gradient(circle at 50% 50%,#d6d6d6 0,#d9d9d9 55%,rgba(222,222,222,0.55) 80%,rgba(225,225,225,0) 100%)"></div>
<div class="abs" style="left:29.8px;top:3.5px;width:8.6px;height:8.6px;border-radius:50%;background:radial-gradient(circle at 50% 50%,#d6d6d6 0,#d9d9d9 55%,rgba(222,222,222,0.55) 80%,rgba(225,225,225,0) 100%)"></div>
<div class="cell" style="right:860.5px">1,00</div>
<div class="cell" style="right:780.5px">0,00 €</div>
<div class="cell" style="right:700.5px">0,00 €</div>
<div class="cell" style="right:620.5px">0,00 €</div>
<div class="cell" style="right:540.5px">463,00 €</div>
<div class="cell" style="right:460.5px">463,00 €</div>
<div class="cell" style="right:340.5px">0,00</div>
<div class="cell" style="right:220.5px">0,00 €</div>
<div class="cell" style="right:140.5px">463,00 €</div>
<div class="cell" style="right:60.5px">100,00</div>
</div>
<div class="row" style="left:0;top:227px;width:1043px">
<div class="abs" style="left:9.7px;top:3.5px;width:8.6px;height:8.6px;border-radius:50%;background:radial-gradient(circle at 50% 50%,#d6d6d6 0,#d9d9d9 55%,rgba(222,222,222,0.55) 80%,rgba(225,225,225,0) 100%)"></div>
<div class="abs" style="left:29.8px;top:3.5px;width:8.6px;height:8.6px;border-radius:50%;background:radial-gradient(circle at 50% 50%,#d6d6d6 0,#d9d9d9 55%,rgba(222,222,222,0.55) 80%,rgba(225,225,225,0) 100%)"></div>
<div class="cell" style="right:860.5px">1,00</div>
<div class="cell" style="right:780.5px">0,00 €</div>
<div class="cell" style="right:700.5px">0,00 €</div>
<div class="cell" style="right:620.5px">0,00 €</div>
<div class="cell" style="right:540.5px">60,00 €</div>
<div class="cell" style="right:460.5px">60,00 €</div>
<div class="cell" style="right:340.5px">0,00</div>
<div class="cell" style="right:220.5px">0,00 €</div>
<div class="cell" style="right:140.5px">60,00 €</div>
<div class="cell" style="right:60.5px">100,00</div>
</div>
<div class="row alt" style="left:0;top:245px;width:1043px">
<div class="abs" style="left:9.7px;top:3.5px;width:8.6px;height:8.6px;border-radius:50%;background:radial-gradient(circle at 50% 50%,#d6d6d6 0,#d9d9d9 55%,rgba(222,222,222,0.55) 80%,rgba(225,225,225,0) 100%)"></div>
<svg style="left:27.5px;top:2.3px" width="15" height="12" viewBox="0 0 15 12"><path d="M0.9 6.4L4.800 10.300 13.400 1.300" stroke="#3f8f2c" stroke-width="2.500" fill="none"/><path d="M0.900 5.700L4.800 9.600 13.400 0.800" stroke="#79c653" stroke-width="2" fill="none"/></svg>
<div class="cell" style="right:929px">622</div>
<div class="cell" style="right:860.5px">1,00</div>
<div class="cell" style="right:780.5px">500,00 €</div>
<div class="cell" style="right:700.5px">500,00 €</div>
<div class="cell" style="right:620.5px">15,12 €</div>
<div class="cell" style="right:540.5px">504,00 €</div>
<div class="cell" style="right:460.5px">504,00 €</div>
<div class="cell" style="right:340.5px">25,00</div>
<div class="cell" style="right:220.5px">126,00 €</div>
<div class="cell" style="right:140.5px">-137,12 €</div>
<div class="cell" style="right:60.5px">-27,21</div>
</div>
<div class="row sel" style="left:0;top:263px;width:1043px">
<div class="abs" style="left:9.7px;top:3.5px;width:8.6px;height:8.6px;border-radius:50%;background:radial-gradient(circle at 50% 50%,#d6d6d6 0,#d9d9d9 55%,rgba(222,222,222,0.55) 80%,rgba(225,225,225,0) 100%)"></div>
<svg style="left:27.5px;top:2.3px" width="15" height="12" viewBox="0 0 15 12"><path d="M0.9 6.4L4.800 10.300 13.400 1.300" stroke="#3f8f2c" stroke-width="2.500" fill="none"/><path d="M0.900 5.700L4.800 9.600 13.400 0.800" stroke="#79c653" stroke-width="2" fill="none"/></svg>
<div class="cell" style="right:929px">618</div>
<div class="cell" style="right:860.5px">1,00</div>
<div class="cell" style="right:780.5px">0,00 €</div>
<div class="cell" style="right:700.5px">0,00 €</div>
<div class="cell" style="right:620.5px">0,00 €</div>
<div class="cell" style="right:540.5px">10,00 €</div>
<div class="cell" style="right:460.5px">10,00 €</div>
<div class="cell" style="right:340.5px">25,00</div>
<div class="cell" style="right:220.5px">2,50 €</div>
<div class="cell" style="right:140.5px">7,50 €</div>
<div class="cell" style="right:60.5px">75,00</div>
</div>
<div class="row alt" style="left:0;top:281px;width:1043px">
<div class="abs" style="left:9.7px;top:3.5px;width:8.6px;height:8.6px;border-radius:50%;background:radial-gradient(circle at 50% 50%,#d6d6d6 0,#d9d9d9 55%,rgba(222,222,222,0.55) 80%,rgba(225,225,225,0) 100%)"></div>
<svg style="left:27.5px;top:2.3px" width="15" height="12" viewBox="0 0 15 12"><path d="M0.9 6.4L4.800 10.300 13.400 1.300" stroke="#3f8f2c" stroke-width="2.500" fill="none"/><path d="M0.900 5.700L4.800 9.600 13.400 0.800" stroke="#79c653" stroke-width="2" fill="none"/></svg>
<div class="cell" style="right:929px">273</div>
<div class="cell" style="right:860.5px">1,00</div>
<div class="cell" style="right:780.5px">0,00 €</div>
<div class="cell" style="right:700.5px">0,00 €</div>
<div class="cell" style="right:620.5px">0,00 €</div>
<div class="cell" style="right:540.5px">50,00 €</div>
<div class="cell" style="right:460.5px">50,00 €</div>
<div class="cell" style="right:340.5px">25,00</div>
<div class="cell" style="right:220.5px">12,50 €</div>
<div class="cell" style="right:140.5px">37,50 €</div>
</div>
<div class="row" style="left:0;top:299px;width:1043px">
<div class="abs" style="left:9.7px;top:3.5px;width:8.6px;height:8.6px;border-radius:50%;background:radial-gradient(circle at 50% 50%,#d6d6d6 0,#d9d9d9 55%,rgba(222,222,222,0.55) 80%,rgba(225,225,225,0) 100%)"></div>
<svg style="left:27.5px;top:2.3px" width="15" height="12" viewBox="0 0 15 12"><path d="M0.9 6.4L4.800 10.300 13.400 1.300" stroke="#3f8f2c" stroke-width="2.500" fill="none"/><path d="M0.900 5.700L4.800 9.600 13.400 0.800" stroke="#79c653" stroke-width="2" fill="none"/></svg>
<div class="cell" style="right:929px">273</div>
<div class="cell" style="right:860.5px">1,00</div>
<div class="cell" style="right:780.5px">0,00 €</div>
<div class="cell" style="right:700.5px">0,00 €</div>
<div class="cell" style="right:620.5px">0,00 €</div>
<div class="cell" style="right:540.5px">100,00 €</div>
<div class="cell" style="right:460.5px">100,00 €</div>
<div class="cell" style="right:340.5px">25,00</div>
<div class="cell" style="right:220.5px">25,00 €</div>
<div class="cell" style="right:140.5px">75,00 €</div>
</div>
<div class="row alt" style="left:0;top:317px;width:1043px">
<div class="abs" style="left:9.7px;top:3.5px;width:8.6px;height:8.6px;border-radius:50%;background:radial-gradient(circle at 50% 50%,#d6d6d6 0,#d9d9d9 55%,rgba(222,222,222,0.55) 80%,rgba(225,225,225,0) 100%)"></div>
<div class="abs" style="left:29.8px;top:3.5px;width:8.6px;height:8.6px;border-radius:50%;background:radial-gradient(circle at 50% 50%,#d6d6d6 0,#d9d9d9 55%,rgba(222,222,222,0.55) 80%,rgba(225,225,225,0) 100%)"></div>
<div class="cell" style="right:860.5px">1,00</div>
<div class="cell" style="right:780.5px">0,00 €</div>
<div class="cell" style="right:700.5px">0,00 €</div>
<div class="cell" style="right:620.5px">0,00 €</div>
<div class="cell" style="right:540.5px">1.350,00 €</div>
<div class="cell" style="right:460.5px">1.350,00 €</div>
<div class="cell" style="right:340.5px">0,00</div>
<div class="cell" style="right:220.5px">0,00 €</div>
<div class="cell" style="right:140.5px">1.350,00 €</div>
</div>
<div class="row" style="left:0;top:335px;width:1043px">
<div class="abs" style="left:9.7px;top:3.5px;width:8.6px;height:8.6px;border-radius:50%;background:radial-gradient(circle at 50% 50%,#d6d6d6 0,#d9d9d9 55%,rgba(222,222,222,0.55) 80%,rgba(225,225,225,0) 100%)"></div>
<svg style="left:27.5px;top:2.3px" width="15" height="12" viewBox="0 0 15 12"><path d="M0.9 6.4L4.800 10.300 13.400 1.300" stroke="#3f8f2c" stroke-width="2.500" fill="none"/><path d="M0.900 5.700L4.800 9.600 13.400 0.800" stroke="#79c653" stroke-width="2" fill="none"/></svg>
<div class="cell" style="right:929px">619</div>
<div class="cell" style="right:860.5px">1,00</div>
<div class="cell" style="right:780.5px">0,00 €</div>
<div class="cell" style="right:700.5px">0,00 €</div>
<div class="cell" style="right:620.5px">0,00 €</div>
<div class="cell" style="right:540.5px">31,50 €</div>
<div class="cell" style="right:460.5px">31,50 €</div>
<div class="cell" style="right:340.5px">25,00</div>
<div class="cell" style="right:220.5px">7,88 €</div>
<div class="cell" style="right:140.5px">23,63 €</div>
</div>
<div class="row alt" style="left:0;top:353px;width:1043px">
<div class="abs" style="left:9.7px;top:3.5px;width:8.6px;height:8.6px;border-radius:50%;background:radial-gradient(circle at 50% 50%,#d6d6d6 0,#d9d9d9 55%,rgba(222,222,222,0.55) 80%,rgba(225,225,225,0) 100%)"></div>
<svg style="left:27.5px;top:2.3px" width="15" height="12" viewBox="0 0 15 12"><path d="M0.9 6.4L4.800 10.300 13.400 1.300" stroke="#3f8f2c" stroke-width="2.500" fill="none"/><path d="M0.900 5.700L4.800 9.600 13.400 0.800" stroke="#79c653" stroke-width="2" fill="none"/></svg>
<div class="cell" style="right:929px">620</div>
<div class="cell" style="right:860.5px">1,00</div>
<div class="cell" style="right:780.5px">0,00 €</div>
<div class="cell" style="right:700.5px">0,00 €</div>
<div class="cell" style="right:620.5px">0,32 €</div>
<div class="cell" style="right:540.5px">10,80 €</div>
<div class="cell" style="right:460.5px">10,80 €</div>
<div class="cell" style="right:340.5px">25,00</div>
<div class="cell" style="right:220.5px">2,70 €</div>
<div class="cell" style="right:140.5px">7,78 €</div>
</div>
<div class="row" style="left:0;top:371px;width:1043px">
<div class="abs" style="left:9.7px;top:3.5px;width:8.6px;height:8.6px;border-radius:50%;background:radial-gradient(circle at 50% 50%,#d6d6d6 0,#d9d9d9 55%,rgba(222,222,222,0.55) 80%,rgba(225,225,225,0) 100%)"></div>
<svg style="left:27.5px;top:2.3px" width="15" height="12" viewBox="0 0 15 12"><path d="M0.9 6.4L4.800 10.300 13.400 1.300" stroke="#3f8f2c" stroke-width="2.500" fill="none"/><path d="M0.900 5.700L4.800 9.600 13.400 0.800" stroke="#79c653" stroke-width="2" fill="none"/></svg>
<div class="cell" style="right:929px">621</div>
<div class="cell" style="right:860.5px">1,00</div>
<div class="cell" style="right:780.5px">0,00 €</div>
<div class="cell" style="right:700.5px">0,00 €</div>
<div class="cell" style="right:620.5px">1,80 €</div>
<div class="cell" style="right:540.5px">60,00 €</div>
<div class="cell" style="right:460.5px">60,00 €</div>
<div class="cell" style="right:340.5px">25,00</div>
<div class="cell" style="right:220.5px">15,00 €</div>
<div class="cell" style="right:140.5px">43,20 €</div>
</div>
<div class="row alt" style="left:0;top:389px;width:1043px">
<div class="abs" style="left:9.7px;top:3.5px;width:8.6px;height:8.6px;border-radius:50%;background:radial-gradient(circle at 50% 50%,#d6d6d6 0,#d9d9d9 55%,rgba(222,222,222,0.55) 80%,rgba(225,225,225,0) 100%)"></div>
<div class="abs" style="left:29.8px;top:3.5px;width:8.6px;height:8.6px;border-radius:50%;background:radial-gradient(circle at 50% 50%,#d6d6d6 0,#d9d9d9 55%,rgba(222,222,222,0.55) 80%,rgba(225,225,225,0) 100%)"></div>
<div class="cell" style="right:860.5px">1,00</div>
<div class="cell" style="right:780.5px">0,00 €</div>
<div class="cell" style="right:700.5px">0,00 €</div>
<div class="cell" style="right:620.5px">0,00 €</div>
<div class="cell" style="right:540.5px">50,00 €</div>
<div class="cell" style="right:460.5px">50,00 €</div>
<div class="cell" style="right:340.5px">25,00</div>
<div class="cell" style="right:220.5px">12,50 €</div>
<div class="cell" style="right:140.5px">37,50 €</div>
</div>
<div class="row" style="left:0;top:407px;width:1043px">
<svg style="left:7px;top:1px" width="15" height="15" viewBox="0 0 15 15"><circle cx="7.500" cy="7.500" r="6.900" fill="#1ba426" stroke="#3a5f3c" stroke-width="0.500"/><path d="M3.600 7.900l2.700 2.700 5.200-6" stroke="#fff" stroke-width="2.100" fill="none" stroke-linecap="round" stroke-linejoin="round"/></svg>
<div class="abs" style="left:29.8px;top:3.5px;width:8.6px;height:8.6px;border-radius:50%;background:radial-gradient(circle at 50% 50%,#d6d6d6 0,#d9d9d9 55%,rgba(222,222,222,0.55) 80%,rgba(225,225,225,0) 100%)"></div>
<div class="cell" style="right:860.5px">1,00</div>
<div class="cell" style="right:780.5px">10,00 €</div>
<div class="cell" style="right:700.5px">10,00 €</div>
<div class="cell" style="right:620.5px">0,00 €</div>
<div class="cell" style="right:540.5px">180,00 €</div>
<div class="cell" style="right:460.5px">180,00 €</div>
<div class="cell" style="right:340.5px">25,00</div>
<div class="cell" style="right:220.5px">45,00 €</div>
<div class="cell" style="right:140.5px">125,00 €</div>
</div>
<div class="row alt" style="left:0;top:425px;width:1043px">
<div class="abs" style="left:9.7px;top:3.5px;width:8.6px;height:8.6px;border-radius:50%;background:radial-gradient(circle at 50% 50%,#d6d6d6 0,#d9d9d9 55%,rgba(222,222,222,0.55) 80%,rgba(225,225,225,0) 100%)"></div>
<svg style="left:27.5px;top:2.3px" width="15" height="12" viewBox="0 0 15 12"><path d="M0.9 6.4L4.800 10.300 13.400 1.300" stroke="#3f8f2c" stroke-width="2.500" fill="none"/><path d="M0.900 5.700L4.800 9.600 13.400 0.800" stroke="#79c653" stroke-width="2" fill="none"/></svg>
<div class="cell" style="right:929px">616</div>
<div class="cell" style="right:860.5px">1,00</div>
<div class="cell" style="right:780.5px">0,00 €</div>
<div class="cell" style="right:700.5px">0,00 €</div>
<div class="cell" style="right:620.5px">0,00 €</div>
<div class="cell" style="right:540.5px">120,00 €</div>
<div class="cell" style="right:460.5px">120,00 €</div>
<div class="cell" style="right:340.5px">25,00</div>
<div class="cell" style="right:220.5px">30,00 €</div>
<div class="cell" style="right:140.5px">90,00 €</div>
</div>
<div class="row" style="left:0;top:443px;width:1043px">
<svg style="left:7px;top:1px" width="15" height="15" viewBox="0 0 15 15"><circle cx="7.500" cy="7.500" r="6.900" fill="#1ba426" stroke="#3a5f3c" stroke-width="0.500"/><path d="M3.600 7.900l2.700 2.700 5.200-6" stroke="#fff" stroke-width="2.100" fill="none" stroke-linecap="round" stroke-linejoin="round"/></svg>
<svg style="left:27.5px;top:2.3px" width="15" height="12" viewBox="0 0 15 12"><path d="M0.9 6.4L4.800 10.300 13.400 1.300" stroke="#3f8f2c" stroke-width="2.500" fill="none"/><path d="M0.900 5.700L4.800 9.600 13.400 0.800" stroke="#79c653" stroke-width="2" fill="none"/></svg>
<div class="cell" style="right:929px">617</div>
<div class="cell" style="right:860.5px">1,00</div>
<div class="cell" style="right:780.5px">1,00 €</div>
<div class="cell" style="right:700.5px">1,00 €</div>
<div class="cell" style="right:620.5px">75,00 €</div>
<div class="cell" style="right:540.5px">2.500,00 €</div>
<div class="cell" style="right:460.5px">2.500,00 €</div>
<div class="cell" style="right:340.5px">0,00</div>
<div class="cell" style="right:220.5px">0,00 €</div>
<div class="cell" style="right:140.5px">2.424,00 €</div>
</div>
<div class="row alt" style="left:0;top:461px;width:1043px">
<svg style="left:7px;top:1px" width="15" height="15" viewBox="0 0 15 15"><circle cx="7.500" cy="7.500" r="6.900" fill="#1ba426" stroke="#3a5f3c" stroke-width="0.500"/><path d="M3.600 7.900l2.700 2.700 5.200-6" stroke="#fff" stroke-width="2.100" fill="none" stroke-linecap="round" stroke-linejoin="round"/></svg>
<div class="abs" style="left:29.8px;top:3.5px;width:8.6px;height:8.6px;border-radius:50%;background:radial-gradient(circle at 50% 50%,#d6d6d6 0,#d9d9d9 55%,rgba(222,222,222,0.55) 80%,rgba(225,225,225,0) 100%)"></div>
<div class="cell" style="right:860.5px">1,00</div>
<div class="cell" style="right:780.5px">1,00 €</div>
<div class="cell" style="right:700.5px">1,00 €</div>
<div class="cell" style="right:540.5px">2.500,00 €</div>
<div class="cell" style="right:460.5px">2.500,00 €</div>
<div class="cell" style="right:340.5px">0,00</div>
<div class="cell" style="right:220.5px">0,00 €</div>
<div class="cell" style="right:140.5px">2.499,00 €</div>
</div>
<div class="row" style="left:0;top:479px;width:1043px">
<div class="abs" style="left:9.7px;top:3.5px;width:8.6px;height:8.6px;border-radius:50%;background:radial-gradient(circle at 50% 50%,#d6d6d6 0,#d9d9d9 55%,rgba(222,222,222,0.55) 80%,rgba(225,225,225,0) 100%)"></div>
<div class="abs" style="left:29.8px;top:3.5px;width:8.6px;height:8.6px;border-radius:50%;background:radial-gradient(circle at 50% 50%,#d6d6d6 0,#d9d9d9 55%,rgba(222,222,222,0.55) 80%,rgba(225,225,225,0) 100%)"></div>
<div class="cell" style="right:860.5px">1,00</div>
<div class="cell" style="right:780.5px">0,00 €</div>
<div class="cell" style="right:700.5px">0,00 €</div>
<div class="cell" style="right:620.5px">0,00 €</div>
<div class="cell" style="right:540.5px">500,00 €</div>
<div class="cell" style="right:460.5px">500,00 €</div>
<div class="cell" style="right:340.5px">25,00</div>
<div class="cell" style="right:220.5px">125,00 €</div>
<div class="cell" style="right:140.5px">375,00 €</div>
</div>
<div class="row alt" style="left:0;top:497px;width:1043px">
<div class="abs" style="left:9.7px;top:3.5px;width:8.6px;height:8.6px;border-radius:50%;background:radial-gradient(circle at 50% 50%,#d6d6d6 0,#d9d9d9 55%,rgba(222,222,222,0.55) 80%,rgba(225,225,225,0) 100%)"></div>
<div class="abs" style="left:29.8px;top:3.5px;width:8.6px;height:8.6px;border-radius:50%;background:radial-gradient(circle at 50% 50%,#d6d6d6 0,#d9d9d9 55%,rgba(222,222,222,0.55) 80%,rgba(225,225,225,0) 100%)"></div>
<div class="cell" style="right:860.5px">1,00</div>
<div class="cell" style="right:780.5px">0,00 €</div>
<div class="cell" style="right:700.5px">0,00 €</div>
<div class="cell" style="right:620.5px">0,00 €</div>
<div class="cell" style="right:540.5px">1.500,00 €</div>
<div class="cell" style="right:460.5px">1.500,00 €</div>
<div class="cell" style="right:340.5px">50,00</div>
<div class="cell" style="right:220.5px">750,00 €</div>
<div class="cell" style="right:140.5px">750,00 €</div>
</div>
</div>
<div class="abs" style="left:28px;top:380px;width:1px;height:1px;background:#0a50b0"></div>
<div class="abs" style="left:28px;top:382px;width:1px;height:6px;background:#2c2c94"></div>
<div class="abs" style="left:28px;top:397px;width:1px;height:9px;background:#2c2c94"></div>
<div class="abs" style="left:1071px;top:185px;width:16.5px;height:512px;background:#f0f0f0"></div>
<div class="abs" style="left:1071px;top:185px;width:17px;height:6px;background:#ffffff"></div>
<div class="abs" style="left:1071px;top:191px;width:17px;height:2px;background:#111"></div>
<div class="abs" style="left:1086px;top:185px;width:2px;height:8px;background:#111"></div>
<svg style="left:1075.5px;top:199px" width="8" height="7" viewBox="0 0 8 7"><path d="M0.6 6l3.4-4 3.4 4" stroke="#505050" stroke-width="1.8" fill="none"/></svg>
<div class="abs" style="left:1072px;top:210px;width:15px;height:8px;background:#c8c8c8"></div>
<div class="abs" style="left:1088px;top:185px;width:5px;height:548px;background:#d7e3f8"></div>
<div class="abs" style="left:28px;top:698px;width:1043px;height:17px;background:#f0ede0"></div>
<div class="cell" style="right:945px;top:697.5px">38.791,40 €</div>
<div class="cell" style="right:705px;top:697.5px">505.137,57 €</div>
<div class="cell" style="right:465px;top:697.5px">31.153,75 €</div>
<div class="cell" style="right:385px;top:697.5px">434.893,97 €</div>
<div class="abs" style="left:1071px;top:697px;width:16.5px;height:36px;background:#f0f0f0"></div>
<div class="abs" style="left:28px;top:715px;width:1043px;height:18px;background:#f0f0f0"></div>
<div class="abs" style="left:33px;top:715px;width:2px;height:17px;background:#111"></div>
<div class="abs" style="left:28px;top:730px;width:7px;height:2px;background:#111"></div>
<svg style="left:40px;top:720px" width="7" height="8" viewBox="0 0 7 8"><path d="M5.6 0.6L1.2 3.6l4.4 3" stroke="#333" stroke-width="1.7" fill="none"/></svg>
<div class="abs" style="left:316px;top:716px;width:290px;height:15px;background:#c8c8c8"></div>
<div class="abs" style="left:28px;top:732px;width:1287px;height:1px;background:#d7e3f8"></div>
<div class="abs" style="left:28px;top:733px;width:1287px;height:1px;background:#bdbdbd"></div>
<div class="abs" style="left:28px;top:755px;width:1288px;height:1px;background:#ababab"></div>
<div class="abs" style="left:27px;top:755px;width:1px;height:30px;background:#f0f0f0"></div>
<div class="abs" style="left:1315px;top:756px;width:1px;height:30px;background:#f0f0f0"></div>
<svg style="left:36px;top:737px" width="13" height="13" viewBox="0 0 13 13"><path d="M0 0h12v0.600L7.200 6.600v4.200L5 12.800V6.600L0 0.600z" fill="#7c7c7c"/></svg>
<div class="abs" style="left:62px;top:736px;width:1px;height:17px;background:#cfcfcf"></div>
<svg style="left:70px;top:737px" width="17" height="13" viewBox="0 0 17 13"><rect x="0.5" y="0.5" width="15" height="12" fill="#fafafa" stroke="#808080"/><rect x="1" y="1" width="14" height="3" fill="#8fb6d6"/><path d="M0.5 4.5h15M0.5 8.5h15M5.5 0.5v12M10.5 0.5v12" stroke="#808080" stroke-width="1" fill="none"/></svg>
<div class="t" style="left:93.5px;top:737px;color:#333;letter-spacing:0.011px">Nº de registros: 1633 / 1633</div>
<div class="abs" style="left:1093px;top:185px;width:222px;height:548px;background:#ffffff"></div>
<div class="abs" style="left:1093px;top:186px;width:222px;height:25px;background:#72c7c7"></div>
<div class="t" style="left:1101px;top:192px;font-family:'DejaVu Sans Condensed', 'DejaVu Sans', sans-serif;color:#fff;letter-spacing:0.068px">Información</div>
<div class="t" style="left:1101.5px;top:224px;font-family:'DejaVu Sans Condensed', 'DejaVu Sans', sans-serif;color:#333;letter-spacing:0.070px">Fecha inicio:</div>
<div class="abs" style="left:1200px;top:220px;width:107px;height:21px;background:#fff;border:1px solid #6ec4c0"></div>
<div class="t" style="left:1203.3px;top:223px;color:#333;letter-spacing:-0.006px">01/01/2015</div>
<div class="t" style="left:1101.5px;top:250px;font-family:'DejaVu Sans Condensed', 'DejaVu Sans', sans-serif;color:#333;letter-spacing:0.006px">Fecha fin:</div>
<div class="abs" style="left:1200px;top:246px;width:107px;height:21px;background:#fff;border:1px solid #6ec4c0"></div>
<div class="t" style="left:1203.3px;top:249px;color:#333;letter-spacing:-0.006px">31/12/2999</div>
<div class="t" style="left:1101.5px;top:275px;font-family:'DejaVu Sans Condensed', 'DejaVu Sans', sans-serif;color:#333;letter-spacing:0.362px">Total coste:</div>
<div class="abs" style="left:1200px;top:271px;width:107px;height:21px;background:#fff;border:1px solid #6ec4c0"></div>
<div class="t" style="right:13px;top:274px;color:#333;letter-spacing:-0.1px">38.791,40 €</div>
<div class="t" style="left:1101.5px;top:300px;font-family:'DejaVu Sans Condensed', 'DejaVu Sans', sans-serif;color:#333;letter-spacing:0.222px">Total venta:</div>
<div class="abs" style="left:1200px;top:297px;width:107px;height:20px;background:#fff;border:1px solid #6ec4c0"></div>
<div class="t" style="right:13px;top:300px;color:#333;letter-spacing:-0.1px">505.137,57 €</div>
<div class="t" style="left:1101.5px;top:326px;font-family:'DejaVu Sans Condensed', 'DejaVu Sans', sans-serif;color:#333;letter-spacing:0.265px">Total comisiones:</div>
<div class="abs" style="left:1200px;top:322px;width:107px;height:21px;background:#fff;border:1px solid #6ec4c0"></div>
<div class="t" style="right:13px;top:325px;color:#333;letter-spacing:-0.1px">31.153,75 €</div>
<div class="t" style="left:1101.5px;top:354px;font-family:'DejaVu Sans Condensed', 'DejaVu Sans', sans-serif;color:#333;letter-spacing:0.190px">Total margen:</div>
<div class="abs" style="left:1200px;top:350px;width:107px;height:21px;background:#fff;border:1px solid #6ec4c0"></div>
<div class="t" style="right:13px;top:353px;color:#333;letter-spacing:-0.1px">434.893,97 €</div>
<div class="t" style="left:1101.5px;top:382px;font-family:'DejaVu Sans Condensed', 'DejaVu Sans', sans-serif;color:#333;letter-spacing:0.259px">% Total margen:</div>
<div class="abs" style="left:1200px;top:378px;width:107px;height:21px;background:#fff;border:1px solid #6ec4c0"></div>
<div class="t" style="right:13px;top:381px;color:#333;letter-spacing:-0.1px">86,15 %</div>
<svg style="left:39px;top:765px" width="14" height="14" viewBox="0 0 14 14"><circle cx="8.800" cy="5.100" r="4.200" fill="none" stroke="#4583c4" stroke-width="2"/><path d="M5.6 8.2L1 13" stroke="#4583c4" stroke-width="2.6" stroke-linecap="round" fill="none"/></svg>
<div class="t" style="left:55.5px;top:765px;color:#333;letter-spacing:-0.199px">Búsqueda de pacientes</div>
<svg style="left:188px;top:765px" width="14" height="14" viewBox="0 0 14 14"><circle cx="8.800" cy="5.100" r="4.200" fill="none" stroke="#4583c4" stroke-width="2"/><path d="M5.6 8.2L1 13" stroke="#4583c4" stroke-width="2.6" stroke-linecap="round" fill="none"/></svg>
<div class="t" style="left:204.5px;top:765px;color:#333;letter-spacing:-0.149px">Búsqueda de contactos</div>
<svg style="left:339px;top:764px" width="12" height="16" viewBox="0 0 12 16"><rect x="2.200" y="0.600" width="2.600" height="4.600" rx="1" fill="#0a0a0a"/><path d="M0.200 5.600h2.800v5h3.600v2.300H0.200z" fill="#0a0a0a"/><rect x="3" y="4.400" width="1.900" height="3.800" fill="#0a0ac0"/><rect x="3.100" y="1.900" width="1" height="1" fill="#1010d0"/><path d="M3 8l5.600 2.600-0.900 1.800L3 10.200z" fill="#22a4c6"/><rect x="7.600" y="9" width="1.300" height="1.300" fill="#0a0a14"/><rect x="6.700" y="10.300" width="2.800" height="5.300" rx="1.200" fill="#a6aabd"/><circle cx="8.700" cy="3.200" r="2.500" fill="#d6eef8" stroke="#5e6268" stroke-width="1"/></svg>
<div class="t" style="left:354.5px;top:765px;color:#333;letter-spacing:-0.286px">Salas de espera</div>
<svg style="left:451px;top:765px" width="13" height="15" viewBox="0 0 13 15"><path d="M4.300 2.100C3.700 5 5.400 6.600 8 8" stroke="#8c8c8c" stroke-width="1.500" fill="none"/><path d="M10.600 1.500C11.300 4.500 9.600 6.600 8 8" stroke="#222" stroke-width="1.500" fill="none"/><path d="M2.400 12.400C3.600 10.200 5.600 10 7.200 11.400C8.600 12.800 10.500 13.400 11.200 12" stroke="#9a9a9a" stroke-width="1.400" fill="none"/><path d="M7.600 8C10.800 8.600 12 10.400 11.200 12.200C10.600 13.600 8.400 14 6.800 13.200" stroke="#262626" stroke-width="1.400" fill="none"/><ellipse cx="2.100" cy="13.200" rx="2" ry="1.500" fill="#1c1c1c"/><circle cx="4.200" cy="2.200" r="1" fill="#1a1ac0"/><circle cx="10.700" cy="1.700" r="1" fill="#1a9aa8"/></svg>
<div class="t" style="left:468.5px;top:765px;color:#333;letter-spacing:-0.239px">Consultas</div>
<div class="abs" style="left:0px;top:783px;width:1316px;height:1px;background:#ababab"></div>
<div class="abs" style="left:0px;top:804px;width:1316px;height:1px;background:#ababab"></div>
<div class="abs" style="left:6px;top:784px;width:83px;height:20px;background:#ffffff"></div>
<div class="abs" style="left:6px;top:784px;width:1px;height:20px;background:#ababab"></div>
<div class="abs" style="left:89px;top:784px;width:1px;height:20px;background:#ababab"></div>
<div class="abs" style="left:105px;top:784px;width:1px;height:20px;background:#ababab"></div>
<svg style="left:93.5px;top:792.5px" width="8" height="4" viewBox="0 0 8 4"><path d="M0 0h7l-3.5 3.6z" fill="#666"/></svg>
<div class="abs" style="left:118px;top:784px;width:83px;height:20px;background:#ffffff"></div>
<div class="abs" style="left:118px;top:784px;width:1px;height:20px;background:#ababab"></div>
<div class="abs" style="left:201px;top:784px;width:1px;height:20px;background:#ababab"></div>
<div class="abs" style="left:217px;top:784px;width:1px;height:20px;background:#ababab"></div>
<svg style="left:205.5px;top:792.5px" width="8" height="4" viewBox="0 0 8 4"><path d="M0 0h7l-3.5 3.6z" fill="#666"/></svg>
<div class="t" style="left:123px;top:787px;color:#333;letter-spacing:-0.329px">Visita del día</div>
<div class="abs" style="left:320px;top:784px;width:83px;height:20px;background:#ffffff"></div>
<div class="abs" style="left:320px;top:784px;width:1px;height:20px;background:#ababab"></div>
<div class="abs" style="left:403px;top:784px;width:1px;height:20px;background:#ababab"></div>
<div class="abs" style="left:419px;top:784px;width:1px;height:20px;background:#ababab"></div>
<svg style="left:407.5px;top:792.5px" width="8" height="4" viewBox="0 0 8 4"><path d="M0 0h7l-3.5 3.6z" fill="#666"/></svg>
<div class="abs" style="left:587px;top:784px;width:83px;height:20px;background:#ffffff"></div>
<div class="abs" style="left:587px;top:784px;width:1px;height:20px;background:#ababab"></div>
<div class="abs" style="left:670px;top:784px;width:1px;height:20px;background:#ababab"></div>
<div class="abs" style="left:686px;top:784px;width:1px;height:20px;background:#ababab"></div>
<svg style="left:674.5px;top:792.5px" width="8" height="4" viewBox="0 0 8 4"><path d="M0 0h7l-3.5 3.6z" fill="#666"/></svg>
<div class="abs" style="left:225px;top:786px;width:1px;height:17px;background:#cfcfcf"></div>
<div class="abs" style="left:427px;top:786px;width:1px;height:17px;background:#cfcfcf"></div>
<div class="abs" style="left:694px;top:786px;width:1px;height:17px;background:#cfcfcf"></div>
<svg style="left:233px;top:786px" width="17" height="17" viewBox="0 0 17 17"><rect x="0" y="0" width="15.700" height="14.800" fill="#828282"/><rect x="1.2" y="3.8" width="1.700" height="1.700" fill="#f4f4f4"/><rect x="1.2" y="6.8" width="1.700" height="1.700" fill="#f4f4f4"/><rect x="1.2" y="9.8" width="1.700" height="1.700" fill="#f4f4f4"/><rect x="1.2" y="12.8" width="1.700" height="1.700" fill="#f4f4f4"/><rect x="4.25" y="3.8" width="1.700" height="1.700" fill="#f4f4f4"/><rect x="4.25" y="6.8" width="1.700" height="1.700" fill="#f4f4f4"/><rect x="4.25" y="9.8" width="1.700" height="1.700" fill="#f4f4f4"/><rect x="4.25" y="12.8" width="1.700" height="1.700" fill="#f4f4f4"/><rect x="7.3" y="3.8" width="1.700" height="1.700" fill="#f4f4f4"/><rect x="7.3" y="6.8" width="1.700" height="1.700" fill="#f4f4f4"/><rect x="7.3" y="9.8" width="1.700" height="1.700" fill="#f4f4f4"/><rect x="7.3" y="12.8" width="1.700" height="1.700" fill="#f4f4f4"/><rect x="10.35" y="3.8" width="1.700" height="1.700" fill="#f4f4f4"/><rect x="10.35" y="6.8" width="1.700" height="1.700" fill="#f4f4f4"/><rect x="10.35" y="9.8" width="1.700" height="1.700" fill="#f4f4f4"/><rect x="10.35" y="12.8" width="1.700" height="1.700" fill="#f4f4f4"/><rect x="13.4" y="3.8" width="1.700" height="1.700" fill="#f4f4f4"/><rect x="13.4" y="6.8" width="1.700" height="1.700" fill="#f4f4f4"/><rect x="13.4" y="9.8" width="1.700" height="1.700" fill="#f4f4f4"/><rect x="13.4" y="12.8" width="1.700" height="1.700" fill="#f4f4f4"/><rect x="2.500" y="4.600" width="5" height="4.800" fill="#f0f0f0"/><rect x="3.600" y="5.600" width="2.900" height="2.700" fill="#eef6f8" stroke="#d9603f" stroke-width="1.300"/><circle cx="11.400" cy="11.500" r="5.200" fill="#f0f0f0"/><circle cx="11.400" cy="11.500" r="3.900" fill="#f2f8f9" stroke="#d9603f" stroke-width="1.100"/><path d="M11.400 9.300v2.600h2" stroke="#666" stroke-width="0.900" fill="none"/></svg>
<div class="t" style="left:254px;top:787px;color:#333;letter-spacing:-0.321px">Agendas</div>
<svg style="left:300px;top:793px" width="6" height="4" viewBox="0 0 6 4"><path d="M0 0h5l-2.5 2.8z" fill="#111"/></svg>
<svg style="left:435px;top:786px" width="16" height="15" viewBox="0 0 16 15"><rect x="0" y="0" width="16" height="15" fill="#4a80bf"/><rect x="1" y="3.7" width="2" height="1.600" fill="#f6f9fd"/><rect x="1" y="6.7" width="2" height="1.600" fill="#f6f9fd"/><rect x="1" y="9.7" width="2" height="1.600" fill="#f6f9fd"/><rect x="1" y="12.7" width="2" height="1.600" fill="#f6f9fd"/><rect x="4" y="3.7" width="2" height="1.600" fill="#f6f9fd"/><rect x="4" y="6.7" width="2" height="1.600" fill="#f6f9fd"/><rect x="4" y="9.7" width="2" height="1.600" fill="#f6f9fd"/><rect x="4" y="12.7" width="2" height="1.600" fill="#f6f9fd"/><rect x="7" y="3.7" width="2" height="1.600" fill="#f6f9fd"/><rect x="7" y="6.7" width="2" height="1.600" fill="#f6f9fd"/><rect x="7" y="9.7" width="2" height="1.600" fill="#f6f9fd"/><rect x="7" y="12.7" width="2" height="1.600" fill="#f6f9fd"/><rect x="10" y="3.7" width="2" height="1.600" fill="#f6f9fd"/><rect x="10" y="6.7" width="2" height="1.600" fill="#f6f9fd"/><rect x="10" y="9.7" width="2" height="1.600" fill="#f6f9fd"/><rect x="10" y="12.7" width="2" height="1.600" fill="#f6f9fd"/><rect x="13" y="3.7" width="2" height="1.600" fill="#f6f9fd"/><rect x="13" y="6.7" width="2" height="1.600" fill="#f6f9fd"/><rect x="13" y="9.7" width="2" height="1.600" fill="#f6f9fd"/><rect x="13" y="12.7" width="2" height="1.600" fill="#f6f9fd"/></svg>
<div class="t" style="left:456px;top:787px;color:#333;letter-spacing:-0.295px">Consolas de recepción</div>
<svg style="left:567px;top:793px" width="6" height="4" viewBox="0 0 6 4"><path d="M0 0h5l-2.5 2.8z" fill="#111"/></svg>
<svg style="left:703px;top:787px" width="13" height="13" viewBox="0 0 13 13"><path d="M0 0l6 6.600-6 6.600zM5.200 0l7 6.600-7 6.600z" fill="#4a80bf"/></svg>
<div class="t" style="left:723px;top:787px;color:#333;letter-spacing:-0.310px">Visitas rápidas</div>
<svg style="left:803px;top:787px" width="16" height="14" viewBox="0 0 16 14"><rect x="0.500" y="0.500" width="11" height="9" fill="#fdfdff" stroke="#7d9fd8"/><rect x="1" y="1" width="10" height="2.500" fill="#c5d6f2"/><path d="M0.500 3.500h11M0.500 6.500h11M4.500 0.500v9M8.500 0.500v9" stroke="#7d9fd8" stroke-width="1" fill="none"/><path d="M6.200 14.200c0-3 2-4.200 4.800-4.200s4.800 1.200 4.800 4.200c-1.600 0.800-8 0.800-9.600 0z" fill="#6db04e" stroke="#4a8a34" stroke-width="0.500"/><path d="M8.700 4.200h4.600l-0.500 4c-0.300 1.400-0.900 2.200-1.800 2.200s-1.500-0.800-1.800-2.200z" fill="#c48a58" stroke="#7a4a22" stroke-width="0.600"/><path d="M8.500 4.600c0.600-1.700 4.400-1.700 5 0v1h-5z" fill="#8a5424"/></svg>
<div class="t" style="left:823.5px;top:787px;color:#333;letter-spacing:-0.367px">Revisión día</div>
<svg style="left:892.5px;top:787.3px" width="17" height="13" viewBox="0 0 17 13"><g transform="scale(0.53)"><g fill="none" stroke="#4a80bc" stroke-width="4.1"><path d="M9.84 5.17A9.05 9.05 0 0 1 24.95 12.2"/><path d="M21.96 18.63A9.05 9.05 0 0 1 6.85 11.6"/></g><path d="M17.65 11h13.75l-7 7.2z" fill="#4a80bc"/><path d="M0.6 12.8h13.8l-7-7.2z" fill="#4a80bc"/></g></svg>
<div class="t" style="left:913.5px;top:787px;color:#333;letter-spacing:-0.210px">Refrescar</div>
<div class="abs" style="left:386px;top:807px;width:1px;height:16px;background:#cdcdcd"></div>
<div class="abs" style="left:503px;top:807px;width:1px;height:16px;background:#cdcdcd"></div>
<div class="abs" style="left:599px;top:807px;width:1px;height:16px;background:#cdcdcd"></div>
<div class="abs" style="left:813px;top:807px;width:1px;height:16px;background:#cdcdcd"></div>
<div class="abs" style="left:849px;top:807px;width:1px;height:16px;background:#cdcdcd"></div>
<div class="abs" style="left:885px;top:807px;width:1px;height:16px;background:#cdcdcd"></div>
<div class="abs" style="left:989px;top:807px;width:1px;height:16px;background:#cdcdcd"></div>
<div class="abs" style="left:1123px;top:807px;width:1px;height:16px;background:#cdcdcd"></div>
<div class="abs" style="left:1180px;top:807px;width:1px;height:16px;background:#cdcdcd"></div>
<div class="abs" style="left:1251px;top:807px;width:1px;height:16px;background:#cdcdcd"></div>
<svg style="left:394px;top:806.5px" width="16" height="16" viewBox="0 0 16 16"><path d="M1 8.4L7.6 1.6l6.6 6.8" stroke="#6a6a6a" stroke-width="1.3" fill="none"/><path d="M3 7.6v7.2h9.4V7.6" stroke="#6a6a6a" stroke-width="1.2" fill="#fafafa"/><rect x="5.6" y="9.6" width="4.2" height="3.6" fill="#edc06e"/><rect x="11" y="0.6" width="1.6" height="3.4" fill="#3f7bbd"/></svg>
<div class="t" style="left:414.5px;top:808px;color:#333;letter-spacing:-0.309px">Delegación:</div>
<div class="t" style="left:476.5px;top:808px;font-size:10.5px;font-family:'DejaVu Sans Condensed', 'DejaVu Sans', sans-serif;color:#333;letter-spacing:-0.032px">SEC</div>
<svg style="left:512px;top:808px" width="15" height="14" viewBox="0 0 15 14"><ellipse cx="7.200" cy="4.500" rx="3.500" ry="4.300" fill="#76a797"/><path d="M0 14c0-3 2-4.300 4.600-4.900l1-1.600h3.200l1 1.600c2.600 0.600 4.600 1.900 4.600 4.900z" fill="#76a797"/></svg>
<div class="t" style="left:531.5px;top:808px;color:#333;letter-spacing:-0.280px">Usuario:</div>
<div class="t" style="left:580.5px;top:808px;font-size:10.5px;color:#333;letter-spacing:-0.590px">sa</div>
<svg style="left:606.5px;top:807px" width="17" height="16" viewBox="0 0 17 16"><circle cx="8.600" cy="7.600" r="7.900" fill="#08080c"/><path d="M2.400 5.200c1.800-1.800 3.200-1.400 3.600 0s-1.200 2.400-0.800 4.200" stroke="#cfe6ea" stroke-width="1.100" fill="none"/><path d="M5 12.800a6.500 6.500 0 0 0 9 0.800" stroke="#7fd0d8" stroke-width="0.700" fill="none" stroke-dasharray="1 1"/><rect x="7.200" y="5.100" width="7.200" height="5.400" fill="#0c0ca6" stroke="#aab4c8" stroke-width="0.900"/><path d="M9.800 11h2.400l0.800 2h-4z" fill="#e8eef4"/></svg>
<div class="t" style="left:627.5px;top:808px;color:#333;letter-spacing:-0.380px">Modo Cliente (SERVIDOR\OFIMEDIC)</div>
<svg style="left:822px;top:806.5px" width="16" height="16" viewBox="0 0 16 16"><path d="M0 1.500h14v13.700H5.300v-4.600H0z" fill="#edc06e"/><path d="M0.600 11.600h3.800v3.400z" fill="#edc06e"/><rect x="7.200" y="1.500" width="7" height="6.400" fill="#f0f0f0"/><g transform="translate(8.400 0.500) scale(0.820)"><path d="M4.600 0l3.600 3.600-1.200 1.200-0.800-0.200-1.800 1.800 0.200 1.600-1.200 0.300L0.100 5l0.300-1.200 1.600 0.200 1.800-1.800-0.200-0.800z" fill="#3f7bbd"/><path d="M2.200 6.400l-2 2" stroke="#3f7bbd" stroke-width="1.200"/></g></svg>
<svg style="left:857px;top:809px" width="16" height="12" viewBox="0 0 16 12"><rect x="0" y="0" width="15.300" height="11" fill="#a9a9a9"/><path d="M0.400 0.400l14.500 10.200M14.900 0.400L0.400 10.600" stroke="#f4f4f4" stroke-width="0.900" fill="none"/></svg>
<svg style="left:894px;top:808px" width="14" height="13" viewBox="0 0 14 13"><rect x="0.5" y="0.5" width="13" height="12" fill="#fafafa" stroke="#7a7a7a"/><path d="M2 10.6l3-4 2.2 2.6 1.6-1.4 3 2.8z" fill="#76a797"/><circle cx="9.6" cy="4" r="1.2" fill="#edc06e"/></svg>
<div class="t" style="left:914.5px;top:808px;color:#333;letter-spacing:-0.292px">508 Imágenes</div>
<svg style="left:997.5px;top:807px" width="14" height="16" viewBox="0 0 14 16"><ellipse cx="6.8" cy="2.6" rx="6.8" ry="2.6" fill="#edc06e"/><path d="M0 4.4c1 1.8 4 2.2 6.8 2.2s5.800-0.400 6.800-2.200v3.600c-1 1.800-4 2.200-6.800 2.200s-5.800-0.400-6.800-2.200z" fill="#edc06e"/><path d="M0 9.400c1 1.800 4 2.200 6.800 2.200s5.800-0.400 6.800-2.200v3.600c-1 1.800-4 2.400-6.800 2.400s-5.800-0.600-6.800-2.400z" fill="#edc06e"/></svg>
<div class="t" style="left:1018px;top:808px;color:#333;letter-spacing:-0.243px">330,13 MB utilizados</div>
<div class="t" style="left:1131px;top:808px;color:#333;letter-spacing:0.337px">v7.0.0.0</div>
<div class="t" style="left:1188px;top:808px;color:#333;letter-spacing:0.050px">27/09/2018</div>
<div class="t" style="left:1258px;top:808px;color:#333;letter-spacing:0.197px">9:56</div>
<svg style="left:1304px;top:811px" width="11" height="11" viewBox="0 0 11 11"><rect x="8" y="0" width="2" height="2" fill="#8a8a8a"/><rect x="4" y="4" width="2" height="2" fill="#8a8a8a"/><rect x="8" y="4" width="2" height="2" fill="#8a8a8a"/><rect x="0" y="8" width="2" height="2" fill="#8a8a8a"/><rect x="4" y="8" width="2" height="2" fill="#8a8a8a"/><rect x="8" y="8" width="2" height="2" fill="#8a8a8a"/></svg>
<div class="abs" style="left:955px;top:461px;width:231px;height:342px;background:#fcfcfd;border:1px solid #7689ad;border-radius:2px;box-shadow:2px 2px 3px rgba(60,70,90,0.45);overflow:hidden">
<div class="abs" style="left:0;top:0;width:27px;height:100%;background:#f0f4fa;border-right:1px solid #d3dff0"></div>
</div>
<div class="abs" style="left:983px;top:464px;width:200px;height:22px;background:#ededed"></div>
<div class="t" style="left:990.3px;top:468px;font-size:10.5px;font-family:'DejaVu Sans Condensed', 'DejaVu Sans', sans-serif;font-weight:bold;color:#333;letter-spacing:0.230px">Detalle</div>
<div class="t" style="left:990.3px;top:490px;font-size:10.5px;font-family:'DejaVu Sans Condensed', 'DejaVu Sans', sans-serif;color:#2b3d63;letter-spacing:0.414px">Abrir</div>
<div class="t" style="left:1150.5px;top:490px;font-size:10.5px;font-family:'DejaVu Sans Condensed', 'DejaVu Sans', sans-serif;color:#2b3d63;letter-spacing:-0.143px">F4</div>
<div class="t" style="left:990.3px;top:512px;font-size:10.5px;font-family:'DejaVu Sans Condensed', 'DejaVu Sans', sans-serif;color:#2b3d63;letter-spacing:0.100px">Eliminar</div>
<div class="abs" style="left:989px;top:531px;width:195px;height:1px;background:#8f8f8f"></div>
<div class="abs" style="left:989px;top:532px;width:195px;height:1px;background:#f4f4f4"></div>
<div class="abs" style="left:983px;top:534px;width:200px;height:21px;background:#ededed"></div>
<div class="t" style="left:990.3px;top:537px;font-size:10.5px;font-family:'DejaVu Sans Condensed', 'DejaVu Sans', sans-serif;font-weight:bold;color:#333;letter-spacing:0.363px">Caja</div>
<div class="t" style="left:990.3px;top:559px;font-size:10.5px;font-family:'DejaVu Sans Condensed', 'DejaVu Sans', sans-serif;color:#2b3d63;letter-spacing:0.423px">Ver visita</div>
<div class="t" style="left:990.3px;top:581px;font-size:10.5px;font-family:'DejaVu Sans Condensed', 'DejaVu Sans', sans-serif;color:#a9a9a9;letter-spacing:0.599px">Verpresupuesto</div>
<div class="t" style="left:990.3px;top:603px;font-size:10.5px;font-family:'DejaVu Sans Condensed', 'DejaVu Sans', sans-serif;color:#a9a9a9;letter-spacing:0.545px">Ver bono</div>
<div class="abs" style="left:983px;top:621px;width:200px;height:22px;background:#ededed"></div>
<div class="t" style="left:990.3px;top:625px;font-size:10.5px;font-family:'DejaVu Sans Condensed', 'DejaVu Sans', sans-serif;font-weight:bold;color:#333;letter-spacing:0.356px">Paciente</div>
<div class="t" style="left:990.3px;top:647px;font-size:10.5px;font-family:'DejaVu Sans Condensed', 'DejaVu Sans', sans-serif;color:#2b3d63;letter-spacing:0.280px">Ver detalles del paciente</div>
<div class="t" style="left:990.3px;top:669px;font-size:10.5px;font-family:'DejaVu Sans Condensed', 'DejaVu Sans', sans-serif;color:#2b3d63;letter-spacing:0.243px">Contabilidad del paciente</div>
<div class="t" style="left:990.3px;top:691px;font-size:10.5px;font-family:'DejaVu Sans Condensed', 'DejaVu Sans', sans-serif;color:#2b3d63;letter-spacing:0.259px">Historia médica del paciente</div>
<div class="t" style="left:990.3px;top:713px;font-size:10.5px;font-family:'DejaVu Sans Condensed', 'DejaVu Sans', sans-serif;color:#2b3d63;letter-spacing:0.291px">Visitas del paciente</div>
<div class="abs" style="left:989px;top:732px;width:195px;height:1px;background:#8f8f8f"></div>
<div class="abs" style="left:989px;top:733px;width:195px;height:1px;background:#f4f4f4"></div>
<div class="t" style="left:990.3px;top:738px;font-size:10.5px;font-family:'DejaVu Sans Condensed', 'DejaVu Sans', sans-serif;color:#2b3d63;letter-spacing:0.264px">Actuaciones del paciente</div>
<div class="t" style="left:990.3px;top:760px;font-size:10.5px;font-family:'DejaVu Sans Condensed', 'DejaVu Sans', sans-serif;color:#2b3d63;letter-spacing:0.237px">Administrativas del paciente</div>
<div class="t" style="left:990.3px;top:782px;font-size:10.5px;font-family:'DejaVu Sans Condensed', 'DejaVu Sans', sans-serif;color:#2b3d63;letter-spacing:0.220px">Crear administrativas del paciente</div>
<svg style="left:1173px;top:742px" width="5" height="8" viewBox="0 0 5 8"><path d="M0 0l4 3.6-4 3.6z" fill="#1f3864"/></svg>
<svg style="left:1173px;top:764px" width="5" height="8" viewBox="0 0 5 8"><path d="M0 0l4 3.6-4 3.6z" fill="#1f3864"/></svg>
<svg style="left:1173px;top:786px" width="5" height="8" viewBox="0 0 5 8"><path d="M0 0l4 3.6-4 3.6z" fill="#1f3864"/></svg>
<svg style="left:964px;top:490px" width="15" height="16" viewBox="0 0 15 16"><path d="M0.500 0.500H8.200L11.500 3.800V13.500H0.500z" fill="#fff"/><path d="M5 13.500H0.500V0.500H8.200L11.500 3.800V5.600" fill="none" stroke="#6f6f6f"/><path d="M8.200 0.500V3.800H11.500" fill="none" stroke="#6f6f6f"/><path d="M11.600 6.200l3.600 3.400-6.600 6.200-3.800 0.200 0.400-3.600z" fill="#f1f5fb"/><path d="M12 7.500a0.800 0.800 0 0 1 1.100 0l1.100 1.100a0.800 0.800 0 0 1 0 1.100L8.400 14.900 6 15 6.200 12.800z" fill="#3478bd"/><path d="M10.700 8.900l1.900 1.900M6.800 12.900l1.500 1.500" stroke="#e8f0fa" stroke-width="0.600" fill="none"/></svg>
<svg style="left:962.5px;top:511.1px" width="15" height="15" viewBox="0 0 15 15"><path d="M0.800 0.800l13.600 13.400M14.400 0.800L0.800 14.200" stroke="#dc5c36" stroke-width="2.900" fill="none"/></svg>
<svg style="left:963px;top:647px" width="14" height="14" viewBox="0 0 14 14"><ellipse cx="7" cy="4.300" rx="3.400" ry="4.100" fill="#3d7cba"/><path d="M0 14c0-3 2-4.300 4.400-4.900l1-1.500h3.200l1 1.500c2.400 0.600 4.400 1.900 4.400 4.900z" fill="#3d7cba"/></svg>
<div class="t" style="left:964.800px;top:665.300px;font-family:'DejaVu Sans',sans-serif;font-weight:bold;font-size:19px;line-height:22px;color:#f9ca00;-webkit-text-stroke:0.500px #f9ca00;text-shadow:0 0 1px #5e4800,0 0 1px #8a6a00">€</div>
<svg style="left:962px;top:693px" width="16" height="12" viewBox="0 0 16 12"><path d="M0 0.300h5l1.200 1.700h7.600v4.400H3.200L0.200 10.800z" fill="#7c7c7c"/><path d="M3.700 6h12.300l-3.100 4.900H0.300z" fill="#f0c26e"/></svg>
<svg style="left:962px;top:713px" width="16" height="14" viewBox="0 0 16 14"><rect x="0.500" y="0.500" width="11" height="9" fill="#fdfdff" stroke="#7d9fd8"/><rect x="1" y="1" width="10" height="2.500" fill="#c5d6f2"/><path d="M0.500 3.500h11M0.500 6.500h11M4.500 0.500v9M8.500 0.500v9" stroke="#7d9fd8" stroke-width="1" fill="none"/><path d="M6.200 14.200c0-3 2-4.200 4.800-4.200s4.800 1.200 4.800 4.200c-1.600 0.800-8 0.800-9.600 0z" fill="#6db04e" stroke="#4a8a34" stroke-width="0.500"/><path d="M8.700 4.200h4.600l-0.500 4c-0.300 1.400-0.900 2.200-1.800 2.200s-1.500-0.800-1.800-2.200z" fill="#c48a58" stroke="#7a4a22" stroke-width="0.600"/><path d="M8.500 4.600c0.600-1.700 4.400-1.700 5 0v1h-5z" fill="#8a5424"/></svg>
</body></html>
